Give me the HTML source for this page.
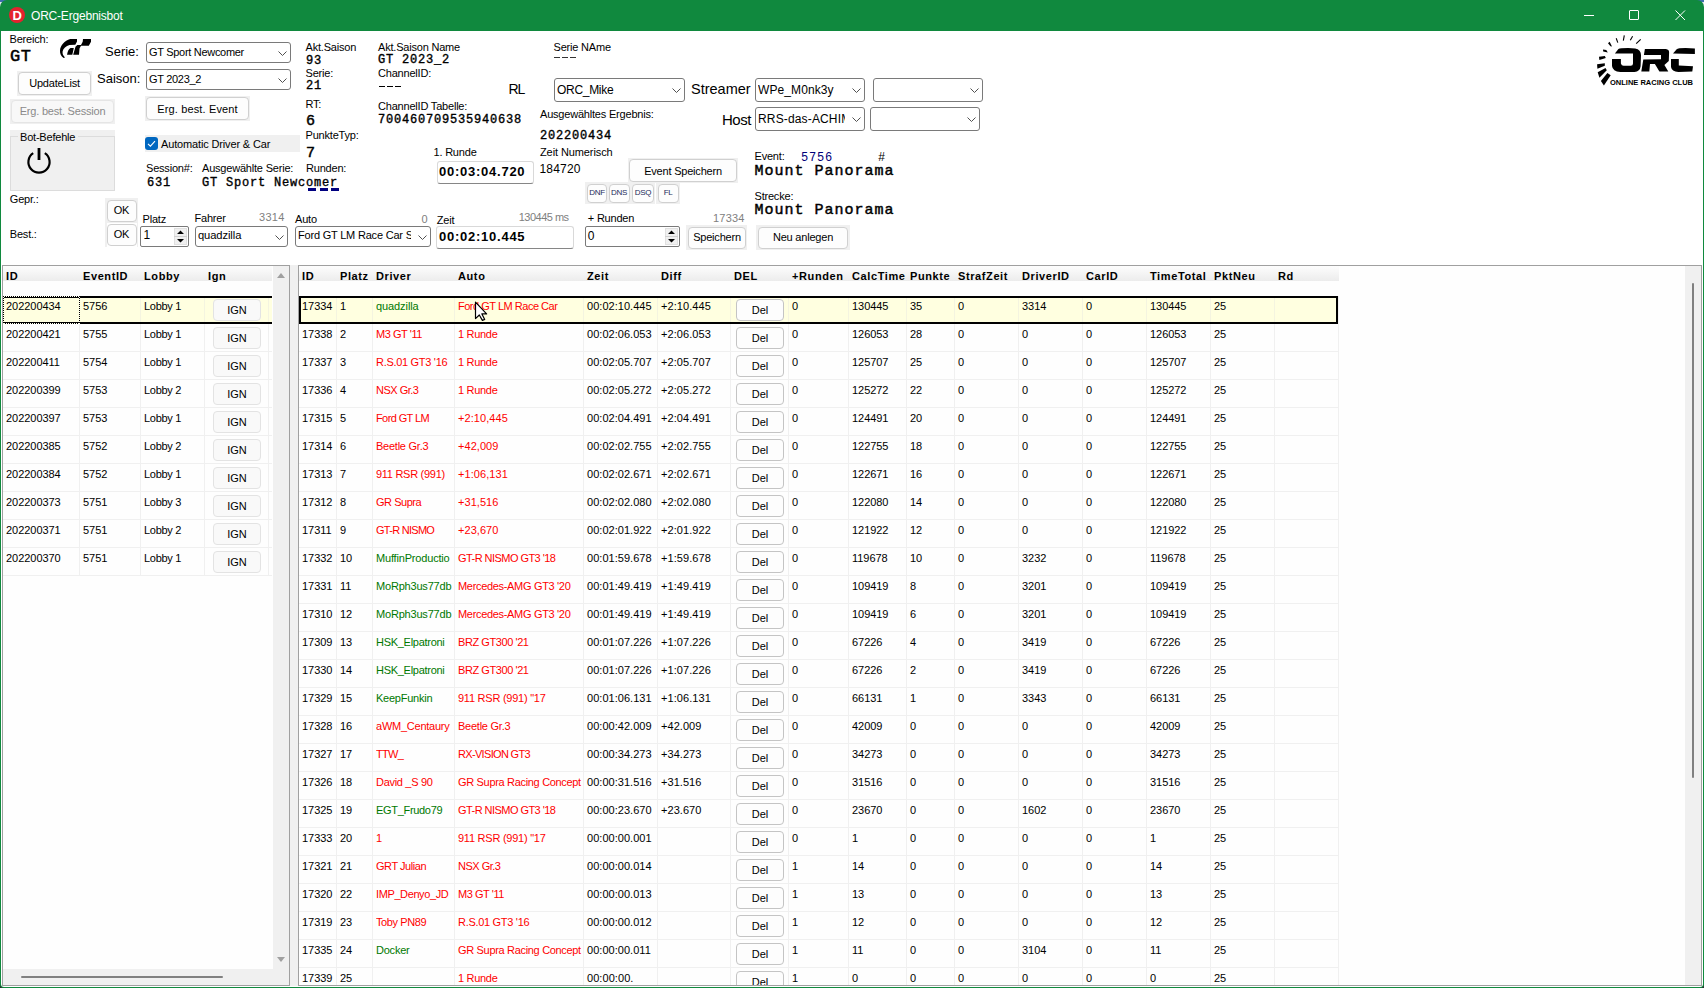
<!DOCTYPE html><html><head><meta charset="utf-8"><style>
html,body{margin:0;padding:0;}
body{width:1704px;height:988px;position:relative;overflow:hidden;background:#fff;font-family:"Liberation Sans",sans-serif;color:#000;}
.t{position:absolute;white-space:pre;}
.r{position:absolute;}
svg{display:block;}
</style></head><body>
<div class="r" style="left:0px;top:0px;width:1704px;height:988px;background:#2b2b30;"></div>
<div class="r" style="left:0px;top:0px;width:1704px;height:12px;background:linear-gradient(#3d6fae 0 2px,#e2e8ef 2px);"></div>
<div class="r" style="left:0px;top:0px;width:1704px;height:988px;background:#10893e;border-radius:7px 7px 4px 4px;"></div>
<div class="r" style="left:1px;top:31px;width:1702px;height:956px;background:#fff;border-radius:0 0 3px 3px;"></div>
<div class="r" style="left:9px;top:7px;width:16px;height:16px;border-radius:50%;background:#e5222e;"></div>
<div class="t" style="left:12.5px;top:9.30px;font-size:13px;line-height:13px;font-weight:700;color:#fff;">D</div>
<div class="t" style="left:31px;top:9.84px;font-size:12px;line-height:12px;color:#fff;letter-spacing:-0.2px;">ORC-Ergebnisbot</div>
<div class="r" style="left:1584px;top:15px;width:10px;height:1px;background:#fff;"></div>
<div class="r" style="left:1629px;top:10px;width:10px;height:10px;border:1px solid #fff;border-radius:1px;box-sizing:border-box;"></div>
<div class="r" style="left:1675px;top:10px;width:11px;height:11px;"><svg width="11" height="11"><path d="M0.5 0.5L10 10M10 0.5L0.5 10" stroke="#fff" stroke-width="1"/></svg></div>
<div class="t" style="left:9.5px;top:33.69px;font-size:11px;line-height:11px;letter-spacing:-0.2px;">Bereich:</div>
<div class="t" style="left:10px;top:47.98px;font-size:17px;line-height:17px;font-family:'Liberation Mono',monospace;-webkit-text-stroke:0.51px #000;letter-spacing:0.5px;">GT</div>
<div class="r" style="left:56px;top:34px;width:40px;height:28px;"><svg width="40" height="28" viewBox="0 0 40 28"><path d="M14.2,5 L21,5 L21,7.6 L19.3,10.8 L13.5,11 C10,12 7.2,14.5 6.6,17.5 C6.3,19.8 7.2,21.8 9,23.4 L7.6,24 C5,22.2 3.8,19.5 4,16.5 C4.4,11 8.5,7 14.2,5 Z" fill="#000"/><path d="M14.5,14 L17.8,14 L16.3,20.8 L11,20.8 C11.6,17.5 12.6,15 14.5,14 Z" fill="#000"/><path d="M27,5 L35,5 L35,7.8 L32.8,11.8 L25,11.8 L23.5,14.5 L23,20.8 L17.2,20.8 L19.5,12.8 L21.3,11 L25,11 L26.7,7.8 Z" fill="#000"/></svg></div>
<div class="t" style="left:105px;top:44.70px;font-size:13px;line-height:13px;">Serie:</div>
<div class="r" style="left:146px;top:42px;width:145px;height:21px;border:1px solid #7a7a7a;border-radius:3px;background:#fff;box-sizing:border-box;"></div>
<div class="r" style="left:149px;top:44px;width:125px;height:17px;overflow:hidden;">
<div class="t" style="left:0px;top:2.69px;font-size:11px;line-height:11px;letter-spacing:-0.3px;">GT Sport Newcomer</div></div>
<div class="r" style="left:278px;top:50.5px;width:9px;height:5px;"><svg width="9" height="5" viewBox="0 0 9 5"><path d="M0.5 0.5 L4.5 4.5 L8.5 0.5" fill="none" stroke="#505050" stroke-width="1"/></svg></div>
<div class="t" style="left:97px;top:72.30px;font-size:13px;line-height:13px;">Saison:</div>
<div class="r" style="left:146px;top:69px;width:145px;height:21px;border:1px solid #7a7a7a;border-radius:3px;background:#fff;box-sizing:border-box;"></div>
<div class="r" style="left:149px;top:71px;width:125px;height:17px;overflow:hidden;">
<div class="t" style="left:0px;top:2.69px;font-size:11px;line-height:11px;letter-spacing:-0.3px;">GT 2023_2</div></div>
<div class="r" style="left:278px;top:77.5px;width:9px;height:5px;"><svg width="9" height="5" viewBox="0 0 9 5"><path d="M0.5 0.5 L4.5 4.5 L8.5 0.5" fill="none" stroke="#505050" stroke-width="1"/></svg></div>
<div class="r" style="left:17px;top:71px;width:75px;height:25px;background:#f0f0f0;"></div>
<div class="r" style="left:18px;top:72px;width:73px;height:23px;background:#fdfdfd;border:1px solid #d0d0d0;border-radius:4px;box-sizing:border-box;"></div>
<div class="t" style="left:18px;top:78.39px;width:73px;text-align:center;font-size:11px;line-height:11px;letter-spacing:-0.2px;">UpdateList</div>
<div class="r" style="left:10px;top:99px;width:105px;height:25px;background:#f0f0f0;"></div>
<div class="r" style="left:11px;top:100px;width:103px;height:23px;background:#f8f8f8;border:1px solid #e5e5e5;border-radius:4px;box-sizing:border-box;"></div>
<div class="t" style="left:11px;top:106.19px;width:103px;text-align:center;font-size:11px;line-height:11px;color:#8a8a8a;letter-spacing:-0.2px;">Erg. best. Session</div>
<div class="r" style="left:145px;top:96px;width:105px;height:25px;background:#f0f0f0;"></div>
<div class="r" style="left:146px;top:97px;width:103px;height:23px;background:#fdfdfd;border:1px solid #d0d0d0;border-radius:4px;box-sizing:border-box;"></div>
<div class="t" style="left:146px;top:103.69px;width:103px;text-align:center;font-size:11px;line-height:11px;letter-spacing:0.15px;">Erg. best. Event</div>
<div class="r" style="left:10px;top:130px;width:105px;height:61px;background:#f0f0f0;"></div>
<div class="r" style="left:10px;top:136px;width:105px;height:55px;border:1px solid #dcdcdc;box-sizing:border-box;"></div>
<div class="r" style="left:18px;top:132px;width:60px;height:8px;background:#f0f0f0;"></div>
<div class="t" style="left:20px;top:131.69px;font-size:11px;line-height:11px;letter-spacing:-0.2px;">Bot-Befehle</div>
<div class="r" style="left:26px;top:148px;width:26px;height:27px;"><svg width="26" height="27" viewBox="0 0 26 27"><path d="M7.2,5.2 A10.6,10.6 0 1 0 18.8,5.2" fill="none" stroke="#000" stroke-width="2.2"/><rect x="11.6" y="0" width="2.8" height="12" fill="#000"/></svg></div>
<div class="r" style="left:145px;top:135px;width:155px;height:17px;background:#f0f0f0;"></div>
<div class="r" style="left:145px;top:137px;width:13px;height:13px;background:#0067c0;border-radius:3px;"></div>
<div class="r" style="left:145px;top:137px;width:13px;height:13px;"><svg width="13" height="13"><path d="M3 6.8 L5.4 9.1 L10 4.2" fill="none" stroke="#fff" stroke-width="1.1"/></svg></div>
<div class="t" style="left:161px;top:138.69px;font-size:11px;line-height:11px;letter-spacing:-0.15px;">Automatic Driver &amp; Car</div>
<div class="t" style="left:146px;top:162.69px;font-size:11px;line-height:11px;letter-spacing:-0.2px;">Session#:</div>
<div class="t" style="left:147px;top:176.81px;font-size:12px;line-height:12px;font-family:'Liberation Mono',monospace;-webkit-text-stroke:0.36px #000;letter-spacing:0.8px;">631</div>
<div class="t" style="left:202px;top:162.69px;font-size:11px;line-height:11px;letter-spacing:-0.2px;">Ausgewählte Serie:</div>
<div class="t" style="left:202px;top:176.81px;font-size:12px;line-height:12px;font-family:'Liberation Mono',monospace;-webkit-text-stroke:0.36px #000;letter-spacing:0.8px;">GT Sport Newcomer</div>
<div class="t" style="left:305.5px;top:41.69px;font-size:11px;line-height:11px;letter-spacing:-0.2px;">Akt.Saison</div>
<div class="t" style="left:306px;top:55.31px;font-size:12px;line-height:12px;font-family:'Liberation Mono',monospace;-webkit-text-stroke:0.36px #000;letter-spacing:0.8px;">93</div>
<div class="t" style="left:305.5px;top:67.69px;font-size:11px;line-height:11px;letter-spacing:-0.2px;">Serie:</div>
<div class="t" style="left:306px;top:79.81px;font-size:12px;line-height:12px;font-family:'Liberation Mono',monospace;-webkit-text-stroke:0.36px #000;letter-spacing:0.8px;">21</div>
<div class="t" style="left:305.5px;top:98.69px;font-size:11px;line-height:11px;letter-spacing:-0.2px;">RT:</div>
<div class="t" style="left:306px;top:114.01px;font-size:15px;line-height:15px;font-family:'Liberation Mono',monospace;-webkit-text-stroke:0.45px #000;letter-spacing:1px;">6</div>
<div class="t" style="left:305.5px;top:129.99px;font-size:11px;line-height:11px;letter-spacing:-0.2px;">PunkteTyp:</div>
<div class="t" style="left:306px;top:146.11px;font-size:15px;line-height:15px;font-family:'Liberation Mono',monospace;-webkit-text-stroke:0.45px #000;letter-spacing:1px;">7</div>
<div class="t" style="left:306px;top:162.69px;font-size:11px;line-height:11px;letter-spacing:-0.2px;">Runden:</div>
<div class="r" style="left:308px;top:188px;width:8px;height:2.6px;background:#000080;"></div>
<div class="r" style="left:319.5px;top:188px;width:8px;height:2.6px;background:#000080;"></div>
<div class="r" style="left:331px;top:188px;width:8px;height:2.6px;background:#000080;"></div>
<div class="t" style="left:378px;top:41.69px;font-size:11px;line-height:11px;letter-spacing:-0.2px;">Akt.Saison Name</div>
<div class="t" style="left:378px;top:53.81px;font-size:12px;line-height:12px;font-family:'Liberation Mono',monospace;-webkit-text-stroke:0.36px #000;letter-spacing:0.8px;">GT 2023_2</div>
<div class="t" style="left:378px;top:67.69px;font-size:11px;line-height:11px;letter-spacing:-0.2px;">ChannelID:</div>
<div class="r" style="left:379px;top:85.5px;width:6px;height:1.4px;background:#000;"></div>
<div class="r" style="left:387px;top:85.5px;width:6px;height:1.4px;background:#000;"></div>
<div class="r" style="left:395px;top:85.5px;width:6px;height:1.4px;background:#000;"></div>
<div class="t" style="left:378px;top:101.19px;font-size:11px;line-height:11px;letter-spacing:-0.2px;">ChannelID Tabelle:</div>
<div class="t" style="left:378px;top:114.41px;font-size:12px;line-height:12px;font-family:'Liberation Mono',monospace;-webkit-text-stroke:0.36px #000;letter-spacing:0.8px;">700460709535940638</div>
<div class="t" style="left:553.5px;top:41.69px;font-size:11px;line-height:11px;letter-spacing:-0.2px;">Serie NAme</div>
<div class="r" style="left:554px;top:57px;width:6px;height:1.2px;background:#333;"></div>
<div class="r" style="left:562px;top:57px;width:6px;height:1.2px;background:#333;"></div>
<div class="r" style="left:570px;top:57px;width:6px;height:1.2px;background:#333;"></div>
<div class="t" style="left:508.5px;top:82.15px;font-size:14px;line-height:14px;letter-spacing:-1px;">RL</div>
<div class="r" style="left:554px;top:78px;width:131px;height:24px;border:1px solid #7a7a7a;border-radius:3px;background:#fff;box-sizing:border-box;"></div>
<div class="r" style="left:557px;top:80px;width:111px;height:20px;overflow:hidden;">
<div class="t" style="left:0px;top:3.84px;font-size:12px;line-height:12px;letter-spacing:-0.3px;">ORC_Mike</div></div>
<div class="r" style="left:672px;top:88.0px;width:9px;height:5px;"><svg width="9" height="5" viewBox="0 0 9 5"><path d="M0.5 0.5 L4.5 4.5 L8.5 0.5" fill="none" stroke="#505050" stroke-width="1"/></svg></div>
<div class="t" style="left:691px;top:82.23px;font-size:14.5px;line-height:14.5px;">Streamer</div>
<div class="r" style="left:755px;top:78px;width:110px;height:24px;border:1px solid #7a7a7a;border-radius:3px;background:#fff;box-sizing:border-box;"></div>
<div class="r" style="left:758px;top:80px;width:90px;height:20px;overflow:hidden;">
<div class="t" style="left:0px;top:3.54px;font-size:12px;line-height:12px;letter-spacing:0.1px;">WPe_M0nk3y</div></div>
<div class="r" style="left:852px;top:88.0px;width:9px;height:5px;"><svg width="9" height="5" viewBox="0 0 9 5"><path d="M0.5 0.5 L4.5 4.5 L8.5 0.5" fill="none" stroke="#505050" stroke-width="1"/></svg></div>
<div class="r" style="left:873px;top:78px;width:110px;height:24px;border:1px solid #7a7a7a;border-radius:3px;background:#fff;box-sizing:border-box;"></div>
<div class="r" style="left:970px;top:88.0px;width:9px;height:5px;"><svg width="9" height="5" viewBox="0 0 9 5"><path d="M0.5 0.5 L4.5 4.5 L8.5 0.5" fill="none" stroke="#505050" stroke-width="1"/></svg></div>
<div class="t" style="left:722px;top:112.30px;font-size:15px;line-height:15px;letter-spacing:-0.5px;">Host</div>
<div class="r" style="left:755px;top:107px;width:110px;height:24px;border:1px solid #7a7a7a;border-radius:3px;background:#fff;box-sizing:border-box;"></div>
<div class="r" style="left:758px;top:109px;width:87px;height:20px;overflow:hidden;">
<div class="t" style="left:0px;top:3.84px;font-size:12px;line-height:12px;letter-spacing:0.15px;">RRS-das-ACHIM</div></div>
<div class="r" style="left:852px;top:117.0px;width:9px;height:5px;"><svg width="9" height="5" viewBox="0 0 9 5"><path d="M0.5 0.5 L4.5 4.5 L8.5 0.5" fill="none" stroke="#505050" stroke-width="1"/></svg></div>
<div class="r" style="left:870px;top:107px;width:110px;height:24px;border:1px solid #7a7a7a;border-radius:3px;background:#fff;box-sizing:border-box;"></div>
<div class="r" style="left:967px;top:117.0px;width:9px;height:5px;"><svg width="9" height="5" viewBox="0 0 9 5"><path d="M0.5 0.5 L4.5 4.5 L8.5 0.5" fill="none" stroke="#505050" stroke-width="1"/></svg></div>
<div class="t" style="left:540px;top:108.59px;font-size:11px;line-height:11px;letter-spacing:-0.2px;">Ausgewähltes Ergebnis:</div>
<div class="t" style="left:540px;top:129.61px;font-size:12px;line-height:12px;font-family:'Liberation Mono',monospace;-webkit-text-stroke:0.36px #000;letter-spacing:0.8px;">202200434</div>
<div class="t" style="left:433.5px;top:147.29px;font-size:11px;line-height:11px;letter-spacing:-0.2px;">1. Runde</div>
<div class="r" style="left:437px;top:161px;width:97px;height:23px;background:#fff;border:1px solid #d9d9d9;border-bottom:1px solid #868686;border-radius:3px;box-sizing:border-box;"></div>
<div class="t" style="left:439px;top:164.80px;font-size:13px;line-height:13px;font-weight:700;letter-spacing:0.75px;">00:03:04.720</div>
<div class="t" style="left:540px;top:146.59px;font-size:11px;line-height:11px;letter-spacing:-0.1px;">Zeit Numerisch</div>
<div class="t" style="left:539.5px;top:162.74px;font-size:12px;line-height:12px;letter-spacing:0.2px;">184720</div>
<div class="r" style="left:628px;top:158px;width:110px;height:25px;background:#f0f0f0;"></div>
<div class="r" style="left:629px;top:159px;width:108px;height:23px;background:#fdfdfd;border:1px solid #d0d0d0;border-radius:4px;box-sizing:border-box;"></div>
<div class="t" style="left:629px;top:165.69px;width:108px;text-align:center;font-size:11px;line-height:11px;letter-spacing:-0.2px;">Event Speichern</div>
<div class="r" style="left:585px;top:182px;width:70px;height:22px;background:#f0f0f0;"></div>
<div class="r" style="left:656px;top:182px;width:24px;height:22px;background:#f0f0f0;"></div>
<div class="r" style="left:587px;top:184px;width:20px;height:19px;background:#fdfdfd;border:1px solid #d0d0d0;border-radius:4px;box-sizing:border-box;"></div>
<div class="t" style="left:587px;top:189.23px;width:20px;text-align:center;font-size:8px;line-height:8px;color:#1c2a5a;letter-spacing:-0.3px;">DNF</div>
<div class="r" style="left:608.5px;top:184px;width:21px;height:19px;background:#fdfdfd;border:1px solid #d0d0d0;border-radius:4px;box-sizing:border-box;"></div>
<div class="t" style="left:608.5px;top:189.23px;width:21px;text-align:center;font-size:8px;line-height:8px;color:#1c2a5a;letter-spacing:-0.3px;">DNS</div>
<div class="r" style="left:632px;top:184px;width:22px;height:19px;background:#fdfdfd;border:1px solid #d0d0d0;border-radius:4px;box-sizing:border-box;"></div>
<div class="t" style="left:632px;top:189.23px;width:22px;text-align:center;font-size:8px;line-height:8px;color:#1c2a5a;letter-spacing:-0.3px;">DSQ</div>
<div class="r" style="left:657.5px;top:184px;width:21px;height:19px;background:#fdfdfd;border:1px solid #d0d0d0;border-radius:4px;box-sizing:border-box;"></div>
<div class="t" style="left:657.5px;top:189.23px;width:21px;text-align:center;font-size:8px;line-height:8px;color:#1c2a5a;letter-spacing:-0.3px;">FL</div>
<div class="t" style="left:754.5px;top:150.99px;font-size:11px;line-height:11px;letter-spacing:-0.2px;">Event:</div>
<div class="t" style="left:801px;top:151.61px;font-size:12px;line-height:12px;font-family:'Liberation Mono',monospace;color:#00007a;letter-spacing:0.8px;">5756</div>
<div class="t" style="left:878px;top:151.61px;font-size:12px;line-height:12px;font-family:'Liberation Mono',monospace;letter-spacing:0.8px;">#</div>
<div class="t" style="left:754.5px;top:163.51px;font-size:15px;line-height:15px;font-family:'Liberation Mono',monospace;-webkit-text-stroke:0.45px #000;letter-spacing:1px;">Mount Panorama</div>
<div class="t" style="left:754.5px;top:190.69px;font-size:11px;line-height:11px;letter-spacing:-0.2px;">Strecke:</div>
<div class="t" style="left:754.5px;top:203.41px;font-size:15px;line-height:15px;font-family:'Liberation Mono',monospace;-webkit-text-stroke:0.45px #000;letter-spacing:1px;">Mount Panorama</div>
<div class="t" style="left:9.8px;top:194.19px;font-size:11px;line-height:11px;letter-spacing:-0.2px;">Gepr.:</div>
<div class="t" style="left:9.8px;top:229.19px;font-size:11px;line-height:11px;letter-spacing:-0.2px;">Best.:</div>
<div class="r" style="left:105px;top:198px;width:33px;height:25px;background:#f0f0f0;"></div>
<div class="r" style="left:106.5px;top:199.5px;width:30px;height:22.5px;background:#fdfdfd;border:1px solid #d0d0d0;border-radius:4px;box-sizing:border-box;"></div>
<div class="t" style="left:106.5px;top:205.19px;width:30px;text-align:center;font-size:11px;line-height:11px;letter-spacing:-0.2px;">OK</div>
<div class="r" style="left:106.5px;top:224px;width:30px;height:21.5px;background:#fdfdfd;border:1px solid #d0d0d0;border-radius:4px;box-sizing:border-box;"></div>
<div class="t" style="left:106.5px;top:229.39px;width:30px;text-align:center;font-size:11px;line-height:11px;letter-spacing:-0.2px;">OK</div>
<div class="r" style="left:105px;top:223px;width:1.5px;height:24px;background:#f0f0f0;"></div>
<div class="r" style="left:136.5px;top:223px;width:1.5px;height:24px;background:#f0f0f0;"></div>
<div class="t" style="left:142.5px;top:214.29px;font-size:11px;line-height:11px;letter-spacing:-0.2px;">Platz</div>
<div class="r" style="left:140px;top:226px;width:49px;height:21px;background:#fff;border:1px solid #7a7a7a;border-radius:2px;box-sizing:border-box;"></div>
<div class="r" style="left:174px;top:228px;width:13px;height:17px;background:#f0f0f0;border:1px solid #e0e0e0;box-sizing:border-box;"></div>
<div class="r" style="left:174px;top:236px;width:13px;height:1px;background:#d0d0d0;"></div>
<div class="r" style="left:177px;top:230px;width:7px;height:13px;"><svg width="7" height="13"><path d="M0 4 L3.5 0.5 L7 4 Z M0 9 L7 9 L3.5 12.5 Z" fill="#000"/></svg></div>
<div class="t" style="left:143.5px;top:229.34px;font-size:12px;line-height:12px;letter-spacing:-0.2px;">1</div>
<div class="t" style="left:194.5px;top:212.69px;font-size:11px;line-height:11px;letter-spacing:-0.2px;">Fahrer</div>
<div class="t" style="left:259px;top:212.19px;font-size:11px;line-height:11px;color:#808080;letter-spacing:0.3px;">3314</div>
<div class="r" style="left:195px;top:226px;width:93px;height:21px;border:1px solid #7a7a7a;border-radius:3px;background:#fff;box-sizing:border-box;"></div>
<div class="r" style="left:198px;top:228px;width:73px;height:17px;overflow:hidden;">
<div class="t" style="left:0px;top:2.02px;font-size:11.2px;line-height:11.2px;letter-spacing:-0.1px;">quadzilla</div></div>
<div class="r" style="left:275px;top:234.5px;width:9px;height:5px;"><svg width="9" height="5" viewBox="0 0 9 5"><path d="M0.5 0.5 L4.5 4.5 L8.5 0.5" fill="none" stroke="#505050" stroke-width="1"/></svg></div>
<div class="t" style="left:295px;top:214.19px;font-size:11px;line-height:11px;letter-spacing:-0.2px;">Auto</div>
<div class="t" style="left:421.5px;top:214.19px;font-size:11px;line-height:11px;color:#808080;letter-spacing:-0.2px;">0</div>
<div class="r" style="left:295px;top:226px;width:136px;height:21px;border:1px solid #7a7a7a;border-radius:3px;background:#fff;box-sizing:border-box;"></div>
<div class="r" style="left:298px;top:228px;width:113px;height:17px;overflow:hidden;">
<div class="t" style="left:0px;top:2.19px;font-size:11px;line-height:11px;letter-spacing:-0.2px;">Ford GT LM Race Car Sp</div></div>
<div class="r" style="left:418px;top:234.5px;width:9px;height:5px;"><svg width="9" height="5" viewBox="0 0 9 5"><path d="M0.5 0.5 L4.5 4.5 L8.5 0.5" fill="none" stroke="#505050" stroke-width="1"/></svg></div>
<div class="t" style="left:436.8px;top:214.59px;font-size:11px;line-height:11px;letter-spacing:-0.2px;">Zeit</div>
<div class="t" style="left:518.7px;top:212.49px;font-size:11px;line-height:11px;color:#808080;letter-spacing:-0.5px;">130445 ms</div>
<div class="r" style="left:436px;top:225.5px;width:138px;height:23px;background:#fff;border:1px solid #d9d9d9;border-bottom:1px solid #868686;border-radius:3px;box-sizing:border-box;"></div>
<div class="t" style="left:439px;top:229.60px;font-size:13px;line-height:13px;font-weight:700;letter-spacing:0.75px;">00:02:10.445</div>
<div class="t" style="left:587.8px;top:212.69px;font-size:11px;line-height:11px;letter-spacing:-0.2px;">+ Runden</div>
<div class="t" style="left:713px;top:212.69px;font-size:11px;line-height:11px;color:#808080;letter-spacing:0.2px;">17334</div>
<div class="r" style="left:585px;top:226px;width:95px;height:21px;background:#fff;border:1px solid #7a7a7a;border-radius:2px;box-sizing:border-box;"></div>
<div class="r" style="left:665px;top:228px;width:13px;height:17px;background:#f0f0f0;border:1px solid #e0e0e0;box-sizing:border-box;"></div>
<div class="r" style="left:665px;top:236px;width:13px;height:1px;background:#d0d0d0;"></div>
<div class="r" style="left:668px;top:230px;width:7px;height:13px;"><svg width="7" height="13"><path d="M0 4 L3.5 0.5 L7 4 Z M0 9 L7 9 L3.5 12.5 Z" fill="#000"/></svg></div>
<div class="t" style="left:587.8px;top:229.94px;font-size:12px;line-height:12px;letter-spacing:-0.2px;">0</div>
<div class="r" style="left:686px;top:225px;width:61px;height:25px;background:#f0f0f0;"></div>
<div class="r" style="left:688px;top:226.5px;width:58px;height:22px;background:#fdfdfd;border:1px solid #d0d0d0;border-radius:4px;box-sizing:border-box;"></div>
<div class="t" style="left:688px;top:232.29px;width:58px;text-align:center;font-size:11px;line-height:11px;letter-spacing:-0.2px;">Speichern</div>
<div class="r" style="left:756px;top:225px;width:94px;height:25px;background:#f0f0f0;"></div>
<div class="r" style="left:758px;top:226.5px;width:90px;height:22px;background:#fdfdfd;border:1px solid #d0d0d0;border-radius:4px;box-sizing:border-box;"></div>
<div class="t" style="left:758px;top:232.49px;width:90px;text-align:center;font-size:11px;line-height:11px;letter-spacing:-0.2px;">Neu anlegen</div>
<div class="r" style="left:1596px;top:34px;width:104px;height:54px;"><svg width="104" height="54" viewBox="1596 34 104 54">
<g fill="#000">
<path d="M1614.9,53.6 L1618.4,49 Q1620,48.1 1628.1,48.1 L1635.2,48.4 Q1641,49.5 1641,55.2 L1640.6,66.2 Q1640,71.5 1634.5,72 L1620.3,72 Q1612.6,71.5 1612,66 L1612,59 L1620.9,59 L1620.9,63.6 Q1621.5,65.8 1623.6,65.8 L1630.7,65.8 Q1633,65.8 1633,63.6 L1633,53.6 Z"/>
<path d="M1644.9,49 L1665.9,49 Q1669.1,49.5 1669.1,52.3 L1668.8,61 L1664.4,64.9 L1668.3,71.6 L1659.4,71.6 L1654.9,63.9 L1650,63.9 L1649.3,71.6 L1641.3,71.6 L1643.3,59.5 L1661,59.2 L1661,54.9 L1643.9,54.9 Z"/>
<path d="M1673,53.6 L1676.5,49.4 Q1678,48.1 1685.5,48.1 L1694.9,48.6 L1694.9,53.9 Z"/>
<path d="M1671,59 L1678.8,59 L1678.8,65.4 L1693,66.2 L1692.3,71.6 L1678.4,72 Q1671.7,71.5 1671,67 Z"/>
<path d="M1600.9,81 L1603.9,85.5 L1610.7,75.2 L1607.4,72.9 Z"/>
<path d="M1597.7,72.3 L1599.4,77.8 L1606.8,70.3 L1605.5,68.1 Z"/>
<path d="M1597.1,64.2 L1597.4,68.7 L1604.8,65.8 L1604.8,63.2 Z"/>
<path d="M1599,56.8 L1599.4,59.9 L1605.8,58 L1604.8,56 Z"/>
<path d="M1603,49.4 L1603.2,51.6 L1607.8,52.5 L1606.3,50 Z"/>
<path d="M1608,43.2 L1609.6,41.7 L1612,46.5 L1610.5,46.3 Z"/>
</g>
<g stroke="#000" stroke-width="1.1" fill="none">
<path d="M1616.2,38.2 L1617.8,42.6"/>
<path d="M1624.3,35.3 L1623.3,40.7"/>
<path d="M1632.6,36.2 L1630.3,40.3"/>
<path d="M1640.7,39.4 L1636.2,43.6"/>
</g>
<text x="1610" y="85" font-family="Liberation Sans" font-weight="700" font-size="7.4" textLength="83" lengthAdjust="spacingAndGlyphs">ONLINE RACING CLUB</text>
</svg></div>
<div class="r" style="left:2px;top:265px;width:288px;height:721px;border:1px solid #a0a0a0;box-sizing:border-box;background:#fefefe;"></div>
<div class="r" style="left:3px;top:266px;width:269px;height:15px;background:linear-gradient(#fdfdfd,#ececec);"></div>
<div class="t" style="left:6px;top:270.69px;font-size:11px;line-height:11px;font-weight:700;letter-spacing:0.6px;">ID</div>
<div class="t" style="left:83px;top:270.69px;font-size:11px;line-height:11px;font-weight:700;letter-spacing:0.6px;">EventID</div>
<div class="t" style="left:144px;top:270.69px;font-size:11px;line-height:11px;font-weight:700;letter-spacing:0.6px;">Lobby</div>
<div class="t" style="left:208px;top:270.69px;font-size:11px;line-height:11px;font-weight:700;letter-spacing:0.6px;">Ign</div>
<div class="r" style="left:3px;top:351px;width:269px;height:1px;background:#f0f0f0;"></div>
<div class="r" style="left:3px;top:379px;width:269px;height:1px;background:#f0f0f0;"></div>
<div class="r" style="left:3px;top:407px;width:269px;height:1px;background:#f0f0f0;"></div>
<div class="r" style="left:3px;top:435px;width:269px;height:1px;background:#f0f0f0;"></div>
<div class="r" style="left:3px;top:463px;width:269px;height:1px;background:#f0f0f0;"></div>
<div class="r" style="left:3px;top:491px;width:269px;height:1px;background:#f0f0f0;"></div>
<div class="r" style="left:3px;top:519px;width:269px;height:1px;background:#f0f0f0;"></div>
<div class="r" style="left:3px;top:547px;width:269px;height:1px;background:#f0f0f0;"></div>
<div class="r" style="left:3px;top:575px;width:269px;height:1px;background:#f0f0f0;"></div>
<div class="r" style="left:79px;top:296px;width:1px;height:280px;background:#f0f0f0;"></div>
<div class="r" style="left:140px;top:296px;width:1px;height:280px;background:#f0f0f0;"></div>
<div class="r" style="left:204px;top:296px;width:1px;height:280px;background:#f0f0f0;"></div>
<div class="r" style="left:268px;top:296px;width:1px;height:280px;background:#f0f0f0;"></div>
<div class="r" style="left:3px;top:298px;width:269px;height:24px;background:#ffffe0;"></div>
<div class="r" style="left:79px;top:298px;width:1px;height:24px;background:#f4f4e0;"></div>
<div class="r" style="left:140px;top:298px;width:1px;height:24px;background:#f4f4e0;"></div>
<div class="r" style="left:204px;top:298px;width:1px;height:24px;background:#f4f4e0;"></div>
<div class="r" style="left:268px;top:298px;width:1px;height:24px;background:#f4f4e0;"></div>
<div class="r" style="left:3px;top:296px;width:269px;height:2px;background:#000;"></div>
<div class="r" style="left:3px;top:322px;width:269px;height:2px;background:#000;"></div>
<div class="r" style="left:3px;top:296px;width:77px;height:1px;background:repeating-linear-gradient(90deg,#000 0 1px,#fffff0 1px 2px);"></div>
<div class="r" style="left:3px;top:323px;width:77px;height:1px;background:repeating-linear-gradient(90deg,#000 0 1px,#fffff0 1px 2px);"></div>
<div class="r" style="left:3px;top:296px;width:1px;height:28px;background:repeating-linear-gradient(180deg,#000 0 1px,#fffff0 1px 2px);"></div>
<div class="r" style="left:79px;top:296px;width:1px;height:28px;background:repeating-linear-gradient(180deg,#000 0 1px,#fffff0 1px 2px);"></div>
<div class="t" style="left:6px;top:300.69px;font-size:11px;line-height:11px;letter-spacing:-0.04px;">202200434</div>
<div class="t" style="left:83px;top:300.69px;font-size:11px;line-height:11px;letter-spacing:-0.048px;">5756</div>
<div class="t" style="left:144px;top:300.69px;font-size:11px;line-height:11px;letter-spacing:-0.302px;">Lobby 1</div>
<div class="r" style="left:213px;top:298.5px;width:48px;height:22px;background:#f9f9f9;border:1px solid #e3e3e3;border-radius:4px;box-sizing:border-box;"></div>
<div class="t" style="left:213px;top:304.69px;width:48px;text-align:center;font-size:11px;line-height:11px;">IGN</div>
<div class="t" style="left:6px;top:328.69px;font-size:11px;line-height:11px;letter-spacing:-0.04px;">202200421</div>
<div class="t" style="left:83px;top:328.69px;font-size:11px;line-height:11px;letter-spacing:-0.048px;">5755</div>
<div class="t" style="left:144px;top:328.69px;font-size:11px;line-height:11px;letter-spacing:-0.302px;">Lobby 1</div>
<div class="r" style="left:213px;top:326.5px;width:48px;height:22px;background:#f9f9f9;border:1px solid #e3e3e3;border-radius:4px;box-sizing:border-box;"></div>
<div class="t" style="left:213px;top:332.69px;width:48px;text-align:center;font-size:11px;line-height:11px;">IGN</div>
<div class="t" style="left:6px;top:356.69px;font-size:11px;line-height:11px;letter-spacing:-0.04px;">202200411</div>
<div class="t" style="left:83px;top:356.69px;font-size:11px;line-height:11px;letter-spacing:-0.048px;">5754</div>
<div class="t" style="left:144px;top:356.69px;font-size:11px;line-height:11px;letter-spacing:-0.302px;">Lobby 1</div>
<div class="r" style="left:213px;top:354.5px;width:48px;height:22px;background:#f9f9f9;border:1px solid #e3e3e3;border-radius:4px;box-sizing:border-box;"></div>
<div class="t" style="left:213px;top:360.69px;width:48px;text-align:center;font-size:11px;line-height:11px;">IGN</div>
<div class="t" style="left:6px;top:384.69px;font-size:11px;line-height:11px;letter-spacing:-0.04px;">202200399</div>
<div class="t" style="left:83px;top:384.69px;font-size:11px;line-height:11px;letter-spacing:-0.048px;">5753</div>
<div class="t" style="left:144px;top:384.69px;font-size:11px;line-height:11px;letter-spacing:-0.302px;">Lobby 2</div>
<div class="r" style="left:213px;top:382.5px;width:48px;height:22px;background:#f9f9f9;border:1px solid #e3e3e3;border-radius:4px;box-sizing:border-box;"></div>
<div class="t" style="left:213px;top:388.69px;width:48px;text-align:center;font-size:11px;line-height:11px;">IGN</div>
<div class="t" style="left:6px;top:412.69px;font-size:11px;line-height:11px;letter-spacing:-0.04px;">202200397</div>
<div class="t" style="left:83px;top:412.69px;font-size:11px;line-height:11px;letter-spacing:-0.048px;">5753</div>
<div class="t" style="left:144px;top:412.69px;font-size:11px;line-height:11px;letter-spacing:-0.302px;">Lobby 1</div>
<div class="r" style="left:213px;top:410.5px;width:48px;height:22px;background:#f9f9f9;border:1px solid #e3e3e3;border-radius:4px;box-sizing:border-box;"></div>
<div class="t" style="left:213px;top:416.69px;width:48px;text-align:center;font-size:11px;line-height:11px;">IGN</div>
<div class="t" style="left:6px;top:440.69px;font-size:11px;line-height:11px;letter-spacing:-0.04px;">202200385</div>
<div class="t" style="left:83px;top:440.69px;font-size:11px;line-height:11px;letter-spacing:-0.048px;">5752</div>
<div class="t" style="left:144px;top:440.69px;font-size:11px;line-height:11px;letter-spacing:-0.302px;">Lobby 2</div>
<div class="r" style="left:213px;top:438.5px;width:48px;height:22px;background:#f9f9f9;border:1px solid #e3e3e3;border-radius:4px;box-sizing:border-box;"></div>
<div class="t" style="left:213px;top:444.69px;width:48px;text-align:center;font-size:11px;line-height:11px;">IGN</div>
<div class="t" style="left:6px;top:468.69px;font-size:11px;line-height:11px;letter-spacing:-0.04px;">202200384</div>
<div class="t" style="left:83px;top:468.69px;font-size:11px;line-height:11px;letter-spacing:-0.048px;">5752</div>
<div class="t" style="left:144px;top:468.69px;font-size:11px;line-height:11px;letter-spacing:-0.302px;">Lobby 1</div>
<div class="r" style="left:213px;top:466.5px;width:48px;height:22px;background:#f9f9f9;border:1px solid #e3e3e3;border-radius:4px;box-sizing:border-box;"></div>
<div class="t" style="left:213px;top:472.69px;width:48px;text-align:center;font-size:11px;line-height:11px;">IGN</div>
<div class="t" style="left:6px;top:496.69px;font-size:11px;line-height:11px;letter-spacing:-0.04px;">202200373</div>
<div class="t" style="left:83px;top:496.69px;font-size:11px;line-height:11px;letter-spacing:-0.048px;">5751</div>
<div class="t" style="left:144px;top:496.69px;font-size:11px;line-height:11px;letter-spacing:-0.302px;">Lobby 3</div>
<div class="r" style="left:213px;top:494.5px;width:48px;height:22px;background:#f9f9f9;border:1px solid #e3e3e3;border-radius:4px;box-sizing:border-box;"></div>
<div class="t" style="left:213px;top:500.69px;width:48px;text-align:center;font-size:11px;line-height:11px;">IGN</div>
<div class="t" style="left:6px;top:524.69px;font-size:11px;line-height:11px;letter-spacing:-0.04px;">202200371</div>
<div class="t" style="left:83px;top:524.69px;font-size:11px;line-height:11px;letter-spacing:-0.048px;">5751</div>
<div class="t" style="left:144px;top:524.69px;font-size:11px;line-height:11px;letter-spacing:-0.302px;">Lobby 2</div>
<div class="r" style="left:213px;top:522.5px;width:48px;height:22px;background:#f9f9f9;border:1px solid #e3e3e3;border-radius:4px;box-sizing:border-box;"></div>
<div class="t" style="left:213px;top:528.69px;width:48px;text-align:center;font-size:11px;line-height:11px;">IGN</div>
<div class="t" style="left:6px;top:552.69px;font-size:11px;line-height:11px;letter-spacing:-0.04px;">202200370</div>
<div class="t" style="left:83px;top:552.69px;font-size:11px;line-height:11px;letter-spacing:-0.048px;">5751</div>
<div class="t" style="left:144px;top:552.69px;font-size:11px;line-height:11px;letter-spacing:-0.302px;">Lobby 1</div>
<div class="r" style="left:213px;top:550.5px;width:48px;height:22px;background:#f9f9f9;border:1px solid #e3e3e3;border-radius:4px;box-sizing:border-box;"></div>
<div class="t" style="left:213px;top:556.69px;width:48px;text-align:center;font-size:11px;line-height:11px;">IGN</div>
<div class="r" style="left:273px;top:266px;width:16px;height:719px;background:#f0f0f0;"></div>
<div class="r" style="left:3px;top:969px;width:270px;height:16px;background:#f0f0f0;"></div>
<div class="r" style="left:21px;top:976px;width:202px;height:2px;background:#808080;border-radius:1px;"></div>
<div class="r" style="left:276px;top:271px;width:10px;height:8px;"><svg width="10" height="8"><path d="M1 7 L5 2 L9 7 Z" fill="#a0a0a0"/></svg></div>
<div class="r" style="left:276px;top:956px;width:10px;height:8px;"><svg width="10" height="8"><path d="M1 1 L9 1 L5 6 Z" fill="#a0a0a0"/></svg></div>
<div class="r" style="left:290px;top:265px;width:8px;height:721px;background:#f0f0f0;"></div>
<div class="r" style="left:298px;top:265px;width:1404px;height:721px;border:1px solid #a0a0a0;box-sizing:border-box;background:#fefefe;"></div>
<div class="r" style="left:299px;top:266px;width:1040px;height:15px;background:linear-gradient(#fdfdfd,#ececec);"></div>
<div class="t" style="left:302px;top:270.69px;font-size:11px;line-height:11px;font-weight:700;letter-spacing:0.6px;">ID</div>
<div class="t" style="left:340px;top:270.69px;font-size:11px;line-height:11px;font-weight:700;letter-spacing:0.6px;">Platz</div>
<div class="t" style="left:376px;top:270.69px;font-size:11px;line-height:11px;font-weight:700;letter-spacing:0.6px;">Driver</div>
<div class="t" style="left:458px;top:270.69px;font-size:11px;line-height:11px;font-weight:700;letter-spacing:0.6px;">Auto</div>
<div class="t" style="left:587px;top:270.69px;font-size:11px;line-height:11px;font-weight:700;letter-spacing:0.6px;">Zeit</div>
<div class="t" style="left:661px;top:270.69px;font-size:11px;line-height:11px;font-weight:700;letter-spacing:0.6px;">Diff</div>
<div class="t" style="left:734px;top:270.69px;font-size:11px;line-height:11px;font-weight:700;letter-spacing:0.6px;">DEL</div>
<div class="t" style="left:792px;top:270.69px;font-size:11px;line-height:11px;font-weight:700;letter-spacing:0.6px;">+Runden</div>
<div class="t" style="left:852px;top:270.69px;font-size:11px;line-height:11px;font-weight:700;letter-spacing:0.6px;">CalcTime</div>
<div class="t" style="left:910px;top:270.69px;font-size:11px;line-height:11px;font-weight:700;letter-spacing:0.6px;">Punkte</div>
<div class="t" style="left:958px;top:270.69px;font-size:11px;line-height:11px;font-weight:700;letter-spacing:0.6px;">StrafZeit</div>
<div class="t" style="left:1022px;top:270.69px;font-size:11px;line-height:11px;font-weight:700;letter-spacing:0.6px;">DriverID</div>
<div class="t" style="left:1086px;top:270.69px;font-size:11px;line-height:11px;font-weight:700;letter-spacing:0.6px;">CarID</div>
<div class="t" style="left:1150px;top:270.69px;font-size:11px;line-height:11px;font-weight:700;letter-spacing:0.6px;">TimeTotal</div>
<div class="t" style="left:1214px;top:270.69px;font-size:11px;line-height:11px;font-weight:700;letter-spacing:0.6px;">PktNeu</div>
<div class="t" style="left:1278px;top:270.69px;font-size:11px;line-height:11px;font-weight:700;letter-spacing:0.6px;">Rd</div>
<div class="r" style="left:299px;top:351px;width:1039px;height:1px;background:#f0f0f0;"></div>
<div class="r" style="left:299px;top:379px;width:1039px;height:1px;background:#f0f0f0;"></div>
<div class="r" style="left:299px;top:407px;width:1039px;height:1px;background:#f0f0f0;"></div>
<div class="r" style="left:299px;top:435px;width:1039px;height:1px;background:#f0f0f0;"></div>
<div class="r" style="left:299px;top:463px;width:1039px;height:1px;background:#f0f0f0;"></div>
<div class="r" style="left:299px;top:491px;width:1039px;height:1px;background:#f0f0f0;"></div>
<div class="r" style="left:299px;top:519px;width:1039px;height:1px;background:#f0f0f0;"></div>
<div class="r" style="left:299px;top:547px;width:1039px;height:1px;background:#f0f0f0;"></div>
<div class="r" style="left:299px;top:575px;width:1039px;height:1px;background:#f0f0f0;"></div>
<div class="r" style="left:299px;top:603px;width:1039px;height:1px;background:#f0f0f0;"></div>
<div class="r" style="left:299px;top:631px;width:1039px;height:1px;background:#f0f0f0;"></div>
<div class="r" style="left:299px;top:659px;width:1039px;height:1px;background:#f0f0f0;"></div>
<div class="r" style="left:299px;top:687px;width:1039px;height:1px;background:#f0f0f0;"></div>
<div class="r" style="left:299px;top:715px;width:1039px;height:1px;background:#f0f0f0;"></div>
<div class="r" style="left:299px;top:743px;width:1039px;height:1px;background:#f0f0f0;"></div>
<div class="r" style="left:299px;top:771px;width:1039px;height:1px;background:#f0f0f0;"></div>
<div class="r" style="left:299px;top:799px;width:1039px;height:1px;background:#f0f0f0;"></div>
<div class="r" style="left:299px;top:827px;width:1039px;height:1px;background:#f0f0f0;"></div>
<div class="r" style="left:299px;top:855px;width:1039px;height:1px;background:#f0f0f0;"></div>
<div class="r" style="left:299px;top:883px;width:1039px;height:1px;background:#f0f0f0;"></div>
<div class="r" style="left:299px;top:911px;width:1039px;height:1px;background:#f0f0f0;"></div>
<div class="r" style="left:299px;top:939px;width:1039px;height:1px;background:#f0f0f0;"></div>
<div class="r" style="left:299px;top:967px;width:1039px;height:1px;background:#f0f0f0;"></div>
<div class="r" style="left:336px;top:296px;width:1px;height:689px;background:#f0f0f0;"></div>
<div class="r" style="left:372px;top:296px;width:1px;height:689px;background:#f0f0f0;"></div>
<div class="r" style="left:454px;top:296px;width:1px;height:689px;background:#f0f0f0;"></div>
<div class="r" style="left:583px;top:296px;width:1px;height:689px;background:#f0f0f0;"></div>
<div class="r" style="left:657px;top:296px;width:1px;height:689px;background:#f0f0f0;"></div>
<div class="r" style="left:730px;top:296px;width:1px;height:689px;background:#f0f0f0;"></div>
<div class="r" style="left:788px;top:296px;width:1px;height:689px;background:#f0f0f0;"></div>
<div class="r" style="left:848px;top:296px;width:1px;height:689px;background:#f0f0f0;"></div>
<div class="r" style="left:906px;top:296px;width:1px;height:689px;background:#f0f0f0;"></div>
<div class="r" style="left:954px;top:296px;width:1px;height:689px;background:#f0f0f0;"></div>
<div class="r" style="left:1018px;top:296px;width:1px;height:689px;background:#f0f0f0;"></div>
<div class="r" style="left:1082px;top:296px;width:1px;height:689px;background:#f0f0f0;"></div>
<div class="r" style="left:1146px;top:296px;width:1px;height:689px;background:#f0f0f0;"></div>
<div class="r" style="left:1210px;top:296px;width:1px;height:689px;background:#f0f0f0;"></div>
<div class="r" style="left:1274px;top:296px;width:1px;height:689px;background:#f0f0f0;"></div>
<div class="r" style="left:1338px;top:296px;width:1px;height:689px;background:#f0f0f0;"></div>
<div class="r" style="left:299px;top:296px;width:1039px;height:28px;background:#ffffe0;border:2px solid #000;box-sizing:border-box;"></div>
<div class="r" style="left:336px;top:298px;width:1px;height:24px;background:#f4f4e0;"></div>
<div class="r" style="left:372px;top:298px;width:1px;height:24px;background:#f4f4e0;"></div>
<div class="r" style="left:454px;top:298px;width:1px;height:24px;background:#f4f4e0;"></div>
<div class="r" style="left:583px;top:298px;width:1px;height:24px;background:#f4f4e0;"></div>
<div class="r" style="left:657px;top:298px;width:1px;height:24px;background:#f4f4e0;"></div>
<div class="r" style="left:730px;top:298px;width:1px;height:24px;background:#f4f4e0;"></div>
<div class="r" style="left:788px;top:298px;width:1px;height:24px;background:#f4f4e0;"></div>
<div class="r" style="left:848px;top:298px;width:1px;height:24px;background:#f4f4e0;"></div>
<div class="r" style="left:906px;top:298px;width:1px;height:24px;background:#f4f4e0;"></div>
<div class="r" style="left:954px;top:298px;width:1px;height:24px;background:#f4f4e0;"></div>
<div class="r" style="left:1018px;top:298px;width:1px;height:24px;background:#f4f4e0;"></div>
<div class="r" style="left:1082px;top:298px;width:1px;height:24px;background:#f4f4e0;"></div>
<div class="r" style="left:1146px;top:298px;width:1px;height:24px;background:#f4f4e0;"></div>
<div class="r" style="left:1210px;top:298px;width:1px;height:24px;background:#f4f4e0;"></div>
<div class="r" style="left:1274px;top:298px;width:1px;height:24px;background:#f4f4e0;"></div>
<div class="r" style="left:299px;top:296px;width:1386px;height:689px;overflow:hidden;">
<div class="t" style="left:3px;top:4.69px;font-size:11px;line-height:11px;letter-spacing:-0.045px;">17334</div>
<div class="t" style="left:41px;top:4.69px;font-size:11px;line-height:11px;">1</div>
<div class="r" style="left:77px;top:0px;width:78px;height:27px;overflow:hidden;">
<div class="t" style="left:0px;top:4.69px;font-size:11px;line-height:11px;color:#007800;letter-spacing:-0.087px;">quadzilla</div></div>
<div class="t" style="left:159px;top:4.69px;font-size:11px;line-height:11px;color:#ff0000;letter-spacing:-0.486px;">Ford GT LM Race Car</div>
<div class="t" style="left:288px;top:4.69px;font-size:11px;line-height:11px;letter-spacing:0.038px;">00:02:10.445</div>
<div class="t" style="left:362px;top:4.69px;font-size:11px;line-height:11px;letter-spacing:0.065px;">+2:10.445</div>
<div class="t" style="left:493px;top:4.69px;font-size:11px;line-height:11px;">0</div>
<div class="t" style="left:553px;top:4.69px;font-size:11px;line-height:11px;letter-spacing:-0.043px;">130445</div>
<div class="t" style="left:611px;top:4.69px;font-size:11px;line-height:11px;letter-spacing:-0.072px;">35</div>
<div class="t" style="left:659px;top:4.69px;font-size:11px;line-height:11px;">0</div>
<div class="t" style="left:723px;top:4.69px;font-size:11px;line-height:11px;letter-spacing:-0.048px;">3314</div>
<div class="t" style="left:787px;top:4.69px;font-size:11px;line-height:11px;">0</div>
<div class="t" style="left:851px;top:4.69px;font-size:11px;line-height:11px;letter-spacing:-0.043px;">130445</div>
<div class="t" style="left:915px;top:4.69px;font-size:11px;line-height:11px;letter-spacing:-0.072px;">25</div>
<div class="r" style="left:437px;top:2.5px;width:48px;height:22.5px;background:#fdfdfd;border:1px solid #c4c4c4;border-radius:4px;box-sizing:border-box;"></div>
<div class="t" style="left:437px;top:8.69px;width:48px;text-align:center;font-size:11px;line-height:11px;">Del</div>
<div class="t" style="left:3px;top:32.69px;font-size:11px;line-height:11px;letter-spacing:-0.045px;">17338</div>
<div class="t" style="left:41px;top:32.69px;font-size:11px;line-height:11px;">2</div>
<div class="r" style="left:77px;top:28px;width:78px;height:27px;overflow:hidden;">
<div class="t" style="left:0px;top:4.69px;font-size:11px;line-height:11px;color:#ff0000;letter-spacing:-0.444px;">M3 GT &#x27;11</div></div>
<div class="t" style="left:159px;top:32.69px;font-size:11px;line-height:11px;color:#ff0000;letter-spacing:-0.302px;">1 Runde</div>
<div class="t" style="left:288px;top:32.69px;font-size:11px;line-height:11px;letter-spacing:0.038px;">00:02:06.053</div>
<div class="t" style="left:362px;top:32.69px;font-size:11px;line-height:11px;letter-spacing:0.065px;">+2:06.053</div>
<div class="t" style="left:493px;top:32.69px;font-size:11px;line-height:11px;">0</div>
<div class="t" style="left:553px;top:32.69px;font-size:11px;line-height:11px;letter-spacing:-0.043px;">126053</div>
<div class="t" style="left:611px;top:32.69px;font-size:11px;line-height:11px;letter-spacing:-0.072px;">28</div>
<div class="t" style="left:659px;top:32.69px;font-size:11px;line-height:11px;">0</div>
<div class="t" style="left:723px;top:32.69px;font-size:11px;line-height:11px;">0</div>
<div class="t" style="left:787px;top:32.69px;font-size:11px;line-height:11px;">0</div>
<div class="t" style="left:851px;top:32.69px;font-size:11px;line-height:11px;letter-spacing:-0.043px;">126053</div>
<div class="t" style="left:915px;top:32.69px;font-size:11px;line-height:11px;letter-spacing:-0.072px;">25</div>
<div class="r" style="left:437px;top:30.5px;width:48px;height:22.5px;background:#fdfdfd;border:1px solid #c4c4c4;border-radius:4px;box-sizing:border-box;"></div>
<div class="t" style="left:437px;top:36.69px;width:48px;text-align:center;font-size:11px;line-height:11px;">Del</div>
<div class="t" style="left:3px;top:60.69px;font-size:11px;line-height:11px;letter-spacing:-0.045px;">17337</div>
<div class="t" style="left:41px;top:60.69px;font-size:11px;line-height:11px;">3</div>
<div class="r" style="left:77px;top:56px;width:78px;height:27px;overflow:hidden;">
<div class="t" style="left:0px;top:4.69px;font-size:11px;line-height:11px;color:#ff0000;letter-spacing:-0.299px;">R.S.01 GT3 &#x27;16</div></div>
<div class="t" style="left:159px;top:60.69px;font-size:11px;line-height:11px;color:#ff0000;letter-spacing:-0.302px;">1 Runde</div>
<div class="t" style="left:288px;top:60.69px;font-size:11px;line-height:11px;letter-spacing:0.038px;">00:02:05.707</div>
<div class="t" style="left:362px;top:60.69px;font-size:11px;line-height:11px;letter-spacing:0.065px;">+2:05.707</div>
<div class="t" style="left:493px;top:60.69px;font-size:11px;line-height:11px;">0</div>
<div class="t" style="left:553px;top:60.69px;font-size:11px;line-height:11px;letter-spacing:-0.043px;">125707</div>
<div class="t" style="left:611px;top:60.69px;font-size:11px;line-height:11px;letter-spacing:-0.072px;">25</div>
<div class="t" style="left:659px;top:60.69px;font-size:11px;line-height:11px;">0</div>
<div class="t" style="left:723px;top:60.69px;font-size:11px;line-height:11px;">0</div>
<div class="t" style="left:787px;top:60.69px;font-size:11px;line-height:11px;">0</div>
<div class="t" style="left:851px;top:60.69px;font-size:11px;line-height:11px;letter-spacing:-0.043px;">125707</div>
<div class="t" style="left:915px;top:60.69px;font-size:11px;line-height:11px;letter-spacing:-0.072px;">25</div>
<div class="r" style="left:437px;top:58.5px;width:48px;height:22.5px;background:#fdfdfd;border:1px solid #c4c4c4;border-radius:4px;box-sizing:border-box;"></div>
<div class="t" style="left:437px;top:64.69px;width:48px;text-align:center;font-size:11px;line-height:11px;">Del</div>
<div class="t" style="left:3px;top:88.69px;font-size:11px;line-height:11px;letter-spacing:-0.045px;">17336</div>
<div class="t" style="left:41px;top:88.69px;font-size:11px;line-height:11px;">4</div>
<div class="r" style="left:77px;top:84px;width:78px;height:27px;overflow:hidden;">
<div class="t" style="left:0px;top:4.69px;font-size:11px;line-height:11px;color:#ff0000;letter-spacing:-0.512px;">NSX Gr.3</div></div>
<div class="t" style="left:159px;top:88.69px;font-size:11px;line-height:11px;color:#ff0000;letter-spacing:-0.302px;">1 Runde</div>
<div class="t" style="left:288px;top:88.69px;font-size:11px;line-height:11px;letter-spacing:0.038px;">00:02:05.272</div>
<div class="t" style="left:362px;top:88.69px;font-size:11px;line-height:11px;letter-spacing:0.065px;">+2:05.272</div>
<div class="t" style="left:493px;top:88.69px;font-size:11px;line-height:11px;">0</div>
<div class="t" style="left:553px;top:88.69px;font-size:11px;line-height:11px;letter-spacing:-0.043px;">125272</div>
<div class="t" style="left:611px;top:88.69px;font-size:11px;line-height:11px;letter-spacing:-0.072px;">22</div>
<div class="t" style="left:659px;top:88.69px;font-size:11px;line-height:11px;">0</div>
<div class="t" style="left:723px;top:88.69px;font-size:11px;line-height:11px;">0</div>
<div class="t" style="left:787px;top:88.69px;font-size:11px;line-height:11px;">0</div>
<div class="t" style="left:851px;top:88.69px;font-size:11px;line-height:11px;letter-spacing:-0.043px;">125272</div>
<div class="t" style="left:915px;top:88.69px;font-size:11px;line-height:11px;letter-spacing:-0.072px;">25</div>
<div class="r" style="left:437px;top:86.5px;width:48px;height:22.5px;background:#fdfdfd;border:1px solid #c4c4c4;border-radius:4px;box-sizing:border-box;"></div>
<div class="t" style="left:437px;top:92.69px;width:48px;text-align:center;font-size:11px;line-height:11px;">Del</div>
<div class="t" style="left:3px;top:116.69px;font-size:11px;line-height:11px;letter-spacing:-0.045px;">17315</div>
<div class="t" style="left:41px;top:116.69px;font-size:11px;line-height:11px;">5</div>
<div class="r" style="left:77px;top:112px;width:78px;height:27px;overflow:hidden;">
<div class="t" style="left:0px;top:4.69px;font-size:11px;line-height:11px;color:#ff0000;letter-spacing:-0.602px;">Ford GT LM</div></div>
<div class="t" style="left:159px;top:116.69px;font-size:11px;line-height:11px;color:#ff0000;letter-spacing:0.065px;">+2:10,445</div>
<div class="t" style="left:288px;top:116.69px;font-size:11px;line-height:11px;letter-spacing:0.038px;">00:02:04.491</div>
<div class="t" style="left:362px;top:116.69px;font-size:11px;line-height:11px;letter-spacing:0.065px;">+2:04.491</div>
<div class="t" style="left:493px;top:116.69px;font-size:11px;line-height:11px;">0</div>
<div class="t" style="left:553px;top:116.69px;font-size:11px;line-height:11px;letter-spacing:-0.043px;">124491</div>
<div class="t" style="left:611px;top:116.69px;font-size:11px;line-height:11px;letter-spacing:-0.072px;">20</div>
<div class="t" style="left:659px;top:116.69px;font-size:11px;line-height:11px;">0</div>
<div class="t" style="left:723px;top:116.69px;font-size:11px;line-height:11px;">0</div>
<div class="t" style="left:787px;top:116.69px;font-size:11px;line-height:11px;">0</div>
<div class="t" style="left:851px;top:116.69px;font-size:11px;line-height:11px;letter-spacing:-0.043px;">124491</div>
<div class="t" style="left:915px;top:116.69px;font-size:11px;line-height:11px;letter-spacing:-0.072px;">25</div>
<div class="r" style="left:437px;top:114.5px;width:48px;height:22.5px;background:#fdfdfd;border:1px solid #c4c4c4;border-radius:4px;box-sizing:border-box;"></div>
<div class="t" style="left:437px;top:120.69px;width:48px;text-align:center;font-size:11px;line-height:11px;">Del</div>
<div class="t" style="left:3px;top:144.69px;font-size:11px;line-height:11px;letter-spacing:-0.045px;">17314</div>
<div class="t" style="left:41px;top:144.69px;font-size:11px;line-height:11px;">6</div>
<div class="r" style="left:77px;top:140px;width:78px;height:27px;overflow:hidden;">
<div class="t" style="left:0px;top:4.69px;font-size:11px;line-height:11px;color:#ff0000;letter-spacing:-0.247px;">Beetle Gr.3</div></div>
<div class="t" style="left:159px;top:144.69px;font-size:11px;line-height:11px;color:#ff0000;letter-spacing:0.052px;">+42,009</div>
<div class="t" style="left:288px;top:144.69px;font-size:11px;line-height:11px;letter-spacing:0.038px;">00:02:02.755</div>
<div class="t" style="left:362px;top:144.69px;font-size:11px;line-height:11px;letter-spacing:0.065px;">+2:02.755</div>
<div class="t" style="left:493px;top:144.69px;font-size:11px;line-height:11px;">0</div>
<div class="t" style="left:553px;top:144.69px;font-size:11px;line-height:11px;letter-spacing:-0.043px;">122755</div>
<div class="t" style="left:611px;top:144.69px;font-size:11px;line-height:11px;letter-spacing:-0.072px;">18</div>
<div class="t" style="left:659px;top:144.69px;font-size:11px;line-height:11px;">0</div>
<div class="t" style="left:723px;top:144.69px;font-size:11px;line-height:11px;">0</div>
<div class="t" style="left:787px;top:144.69px;font-size:11px;line-height:11px;">0</div>
<div class="t" style="left:851px;top:144.69px;font-size:11px;line-height:11px;letter-spacing:-0.043px;">122755</div>
<div class="t" style="left:915px;top:144.69px;font-size:11px;line-height:11px;letter-spacing:-0.072px;">25</div>
<div class="r" style="left:437px;top:142.5px;width:48px;height:22.5px;background:#fdfdfd;border:1px solid #c4c4c4;border-radius:4px;box-sizing:border-box;"></div>
<div class="t" style="left:437px;top:148.69px;width:48px;text-align:center;font-size:11px;line-height:11px;">Del</div>
<div class="t" style="left:3px;top:172.69px;font-size:11px;line-height:11px;letter-spacing:-0.045px;">17313</div>
<div class="t" style="left:41px;top:172.69px;font-size:11px;line-height:11px;">7</div>
<div class="r" style="left:77px;top:168px;width:78px;height:27px;overflow:hidden;">
<div class="t" style="left:0px;top:4.69px;font-size:11px;line-height:11px;color:#ff0000;letter-spacing:-0.285px;">911 RSR (991)</div></div>
<div class="t" style="left:159px;top:172.69px;font-size:11px;line-height:11px;color:#ff0000;letter-spacing:0.065px;">+1:06,131</div>
<div class="t" style="left:288px;top:172.69px;font-size:11px;line-height:11px;letter-spacing:0.038px;">00:02:02.671</div>
<div class="t" style="left:362px;top:172.69px;font-size:11px;line-height:11px;letter-spacing:0.065px;">+2:02.671</div>
<div class="t" style="left:493px;top:172.69px;font-size:11px;line-height:11px;">0</div>
<div class="t" style="left:553px;top:172.69px;font-size:11px;line-height:11px;letter-spacing:-0.043px;">122671</div>
<div class="t" style="left:611px;top:172.69px;font-size:11px;line-height:11px;letter-spacing:-0.072px;">16</div>
<div class="t" style="left:659px;top:172.69px;font-size:11px;line-height:11px;">0</div>
<div class="t" style="left:723px;top:172.69px;font-size:11px;line-height:11px;">0</div>
<div class="t" style="left:787px;top:172.69px;font-size:11px;line-height:11px;">0</div>
<div class="t" style="left:851px;top:172.69px;font-size:11px;line-height:11px;letter-spacing:-0.043px;">122671</div>
<div class="t" style="left:915px;top:172.69px;font-size:11px;line-height:11px;letter-spacing:-0.072px;">25</div>
<div class="r" style="left:437px;top:170.5px;width:48px;height:22.5px;background:#fdfdfd;border:1px solid #c4c4c4;border-radius:4px;box-sizing:border-box;"></div>
<div class="t" style="left:437px;top:176.69px;width:48px;text-align:center;font-size:11px;line-height:11px;">Del</div>
<div class="t" style="left:3px;top:200.69px;font-size:11px;line-height:11px;letter-spacing:-0.045px;">17312</div>
<div class="t" style="left:41px;top:200.69px;font-size:11px;line-height:11px;">8</div>
<div class="r" style="left:77px;top:196px;width:78px;height:27px;overflow:hidden;">
<div class="t" style="left:0px;top:4.69px;font-size:11px;line-height:11px;color:#ff0000;letter-spacing:-0.468px;">GR Supra</div></div>
<div class="t" style="left:159px;top:200.69px;font-size:11px;line-height:11px;color:#ff0000;letter-spacing:0.052px;">+31,516</div>
<div class="t" style="left:288px;top:200.69px;font-size:11px;line-height:11px;letter-spacing:0.038px;">00:02:02.080</div>
<div class="t" style="left:362px;top:200.69px;font-size:11px;line-height:11px;letter-spacing:0.065px;">+2:02.080</div>
<div class="t" style="left:493px;top:200.69px;font-size:11px;line-height:11px;">0</div>
<div class="t" style="left:553px;top:200.69px;font-size:11px;line-height:11px;letter-spacing:-0.043px;">122080</div>
<div class="t" style="left:611px;top:200.69px;font-size:11px;line-height:11px;letter-spacing:-0.072px;">14</div>
<div class="t" style="left:659px;top:200.69px;font-size:11px;line-height:11px;">0</div>
<div class="t" style="left:723px;top:200.69px;font-size:11px;line-height:11px;">0</div>
<div class="t" style="left:787px;top:200.69px;font-size:11px;line-height:11px;">0</div>
<div class="t" style="left:851px;top:200.69px;font-size:11px;line-height:11px;letter-spacing:-0.043px;">122080</div>
<div class="t" style="left:915px;top:200.69px;font-size:11px;line-height:11px;letter-spacing:-0.072px;">25</div>
<div class="r" style="left:437px;top:198.5px;width:48px;height:22.5px;background:#fdfdfd;border:1px solid #c4c4c4;border-radius:4px;box-sizing:border-box;"></div>
<div class="t" style="left:437px;top:204.69px;width:48px;text-align:center;font-size:11px;line-height:11px;">Del</div>
<div class="t" style="left:3px;top:228.69px;font-size:11px;line-height:11px;letter-spacing:-0.045px;">17311</div>
<div class="t" style="left:41px;top:228.69px;font-size:11px;line-height:11px;">9</div>
<div class="r" style="left:77px;top:224px;width:78px;height:27px;overflow:hidden;">
<div class="t" style="left:0px;top:4.69px;font-size:11px;line-height:11px;color:#ff0000;letter-spacing:-0.719px;">GT-R NISMO</div></div>
<div class="t" style="left:159px;top:228.69px;font-size:11px;line-height:11px;color:#ff0000;letter-spacing:0.052px;">+23,670</div>
<div class="t" style="left:288px;top:228.69px;font-size:11px;line-height:11px;letter-spacing:0.038px;">00:02:01.922</div>
<div class="t" style="left:362px;top:228.69px;font-size:11px;line-height:11px;letter-spacing:0.065px;">+2:01.922</div>
<div class="t" style="left:493px;top:228.69px;font-size:11px;line-height:11px;">0</div>
<div class="t" style="left:553px;top:228.69px;font-size:11px;line-height:11px;letter-spacing:-0.043px;">121922</div>
<div class="t" style="left:611px;top:228.69px;font-size:11px;line-height:11px;letter-spacing:-0.072px;">12</div>
<div class="t" style="left:659px;top:228.69px;font-size:11px;line-height:11px;">0</div>
<div class="t" style="left:723px;top:228.69px;font-size:11px;line-height:11px;">0</div>
<div class="t" style="left:787px;top:228.69px;font-size:11px;line-height:11px;">0</div>
<div class="t" style="left:851px;top:228.69px;font-size:11px;line-height:11px;letter-spacing:-0.043px;">121922</div>
<div class="t" style="left:915px;top:228.69px;font-size:11px;line-height:11px;letter-spacing:-0.072px;">25</div>
<div class="r" style="left:437px;top:226.5px;width:48px;height:22.5px;background:#fdfdfd;border:1px solid #c4c4c4;border-radius:4px;box-sizing:border-box;"></div>
<div class="t" style="left:437px;top:232.69px;width:48px;text-align:center;font-size:11px;line-height:11px;">Del</div>
<div class="t" style="left:3px;top:256.69px;font-size:11px;line-height:11px;letter-spacing:-0.045px;">17332</div>
<div class="t" style="left:41px;top:256.69px;font-size:11px;line-height:11px;letter-spacing:-0.072px;">10</div>
<div class="r" style="left:77px;top:252px;width:78px;height:27px;overflow:hidden;">
<div class="t" style="left:0px;top:4.69px;font-size:11px;line-height:11px;color:#007800;letter-spacing:-0.179px;">MuffinProductio</div></div>
<div class="t" style="left:159px;top:256.69px;font-size:11px;line-height:11px;color:#ff0000;letter-spacing:-0.546px;">GT-R NISMO GT3 &#x27;18</div>
<div class="t" style="left:288px;top:256.69px;font-size:11px;line-height:11px;letter-spacing:0.038px;">00:01:59.678</div>
<div class="t" style="left:362px;top:256.69px;font-size:11px;line-height:11px;letter-spacing:0.065px;">+1:59.678</div>
<div class="t" style="left:493px;top:256.69px;font-size:11px;line-height:11px;">0</div>
<div class="t" style="left:553px;top:256.69px;font-size:11px;line-height:11px;letter-spacing:-0.043px;">119678</div>
<div class="t" style="left:611px;top:256.69px;font-size:11px;line-height:11px;letter-spacing:-0.072px;">10</div>
<div class="t" style="left:659px;top:256.69px;font-size:11px;line-height:11px;">0</div>
<div class="t" style="left:723px;top:256.69px;font-size:11px;line-height:11px;letter-spacing:-0.048px;">3232</div>
<div class="t" style="left:787px;top:256.69px;font-size:11px;line-height:11px;">0</div>
<div class="t" style="left:851px;top:256.69px;font-size:11px;line-height:11px;letter-spacing:-0.043px;">119678</div>
<div class="t" style="left:915px;top:256.69px;font-size:11px;line-height:11px;letter-spacing:-0.072px;">25</div>
<div class="r" style="left:437px;top:254.5px;width:48px;height:22.5px;background:#fdfdfd;border:1px solid #c4c4c4;border-radius:4px;box-sizing:border-box;"></div>
<div class="t" style="left:437px;top:260.69px;width:48px;text-align:center;font-size:11px;line-height:11px;">Del</div>
<div class="t" style="left:3px;top:284.69px;font-size:11px;line-height:11px;letter-spacing:-0.045px;">17331</div>
<div class="t" style="left:41px;top:284.69px;font-size:11px;line-height:11px;letter-spacing:-0.072px;">11</div>
<div class="r" style="left:77px;top:280px;width:78px;height:27px;overflow:hidden;">
<div class="t" style="left:0px;top:4.69px;font-size:11px;line-height:11px;color:#007800;letter-spacing:-0.195px;">MoRph3us77db</div></div>
<div class="t" style="left:159px;top:284.69px;font-size:11px;line-height:11px;color:#ff0000;letter-spacing:-0.321px;">Mercedes-AMG GT3 &#x27;20</div>
<div class="t" style="left:288px;top:284.69px;font-size:11px;line-height:11px;letter-spacing:0.038px;">00:01:49.419</div>
<div class="t" style="left:362px;top:284.69px;font-size:11px;line-height:11px;letter-spacing:0.065px;">+1:49.419</div>
<div class="t" style="left:493px;top:284.69px;font-size:11px;line-height:11px;">0</div>
<div class="t" style="left:553px;top:284.69px;font-size:11px;line-height:11px;letter-spacing:-0.043px;">109419</div>
<div class="t" style="left:611px;top:284.69px;font-size:11px;line-height:11px;">8</div>
<div class="t" style="left:659px;top:284.69px;font-size:11px;line-height:11px;">0</div>
<div class="t" style="left:723px;top:284.69px;font-size:11px;line-height:11px;letter-spacing:-0.048px;">3201</div>
<div class="t" style="left:787px;top:284.69px;font-size:11px;line-height:11px;">0</div>
<div class="t" style="left:851px;top:284.69px;font-size:11px;line-height:11px;letter-spacing:-0.043px;">109419</div>
<div class="t" style="left:915px;top:284.69px;font-size:11px;line-height:11px;letter-spacing:-0.072px;">25</div>
<div class="r" style="left:437px;top:282.5px;width:48px;height:22.5px;background:#fdfdfd;border:1px solid #c4c4c4;border-radius:4px;box-sizing:border-box;"></div>
<div class="t" style="left:437px;top:288.69px;width:48px;text-align:center;font-size:11px;line-height:11px;">Del</div>
<div class="t" style="left:3px;top:312.69px;font-size:11px;line-height:11px;letter-spacing:-0.045px;">17310</div>
<div class="t" style="left:41px;top:312.69px;font-size:11px;line-height:11px;letter-spacing:-0.072px;">12</div>
<div class="r" style="left:77px;top:308px;width:78px;height:27px;overflow:hidden;">
<div class="t" style="left:0px;top:4.69px;font-size:11px;line-height:11px;color:#007800;letter-spacing:-0.195px;">MoRph3us77db</div></div>
<div class="t" style="left:159px;top:312.69px;font-size:11px;line-height:11px;color:#ff0000;letter-spacing:-0.321px;">Mercedes-AMG GT3 &#x27;20</div>
<div class="t" style="left:288px;top:312.69px;font-size:11px;line-height:11px;letter-spacing:0.038px;">00:01:49.419</div>
<div class="t" style="left:362px;top:312.69px;font-size:11px;line-height:11px;letter-spacing:0.065px;">+1:49.419</div>
<div class="t" style="left:493px;top:312.69px;font-size:11px;line-height:11px;">0</div>
<div class="t" style="left:553px;top:312.69px;font-size:11px;line-height:11px;letter-spacing:-0.043px;">109419</div>
<div class="t" style="left:611px;top:312.69px;font-size:11px;line-height:11px;">6</div>
<div class="t" style="left:659px;top:312.69px;font-size:11px;line-height:11px;">0</div>
<div class="t" style="left:723px;top:312.69px;font-size:11px;line-height:11px;letter-spacing:-0.048px;">3201</div>
<div class="t" style="left:787px;top:312.69px;font-size:11px;line-height:11px;">0</div>
<div class="t" style="left:851px;top:312.69px;font-size:11px;line-height:11px;letter-spacing:-0.043px;">109419</div>
<div class="t" style="left:915px;top:312.69px;font-size:11px;line-height:11px;letter-spacing:-0.072px;">25</div>
<div class="r" style="left:437px;top:310.5px;width:48px;height:22.5px;background:#fdfdfd;border:1px solid #c4c4c4;border-radius:4px;box-sizing:border-box;"></div>
<div class="t" style="left:437px;top:316.69px;width:48px;text-align:center;font-size:11px;line-height:11px;">Del</div>
<div class="t" style="left:3px;top:340.69px;font-size:11px;line-height:11px;letter-spacing:-0.045px;">17309</div>
<div class="t" style="left:41px;top:340.69px;font-size:11px;line-height:11px;letter-spacing:-0.072px;">13</div>
<div class="r" style="left:77px;top:336px;width:78px;height:27px;overflow:hidden;">
<div class="t" style="left:0px;top:4.69px;font-size:11px;line-height:11px;color:#007800;letter-spacing:-0.281px;">HSK_Elpatroni</div></div>
<div class="t" style="left:159px;top:340.69px;font-size:11px;line-height:11px;color:#ff0000;letter-spacing:-0.427px;">BRZ GT300 &#x27;21</div>
<div class="t" style="left:288px;top:340.69px;font-size:11px;line-height:11px;letter-spacing:0.038px;">00:01:07.226</div>
<div class="t" style="left:362px;top:340.69px;font-size:11px;line-height:11px;letter-spacing:0.065px;">+1:07.226</div>
<div class="t" style="left:493px;top:340.69px;font-size:11px;line-height:11px;">0</div>
<div class="t" style="left:553px;top:340.69px;font-size:11px;line-height:11px;letter-spacing:-0.045px;">67226</div>
<div class="t" style="left:611px;top:340.69px;font-size:11px;line-height:11px;">4</div>
<div class="t" style="left:659px;top:340.69px;font-size:11px;line-height:11px;">0</div>
<div class="t" style="left:723px;top:340.69px;font-size:11px;line-height:11px;letter-spacing:-0.048px;">3419</div>
<div class="t" style="left:787px;top:340.69px;font-size:11px;line-height:11px;">0</div>
<div class="t" style="left:851px;top:340.69px;font-size:11px;line-height:11px;letter-spacing:-0.045px;">67226</div>
<div class="t" style="left:915px;top:340.69px;font-size:11px;line-height:11px;letter-spacing:-0.072px;">25</div>
<div class="r" style="left:437px;top:338.5px;width:48px;height:22.5px;background:#fdfdfd;border:1px solid #c4c4c4;border-radius:4px;box-sizing:border-box;"></div>
<div class="t" style="left:437px;top:344.69px;width:48px;text-align:center;font-size:11px;line-height:11px;">Del</div>
<div class="t" style="left:3px;top:368.69px;font-size:11px;line-height:11px;letter-spacing:-0.045px;">17330</div>
<div class="t" style="left:41px;top:368.69px;font-size:11px;line-height:11px;letter-spacing:-0.072px;">14</div>
<div class="r" style="left:77px;top:364px;width:78px;height:27px;overflow:hidden;">
<div class="t" style="left:0px;top:4.69px;font-size:11px;line-height:11px;color:#007800;letter-spacing:-0.281px;">HSK_Elpatroni</div></div>
<div class="t" style="left:159px;top:368.69px;font-size:11px;line-height:11px;color:#ff0000;letter-spacing:-0.427px;">BRZ GT300 &#x27;21</div>
<div class="t" style="left:288px;top:368.69px;font-size:11px;line-height:11px;letter-spacing:0.038px;">00:01:07.226</div>
<div class="t" style="left:362px;top:368.69px;font-size:11px;line-height:11px;letter-spacing:0.065px;">+1:07.226</div>
<div class="t" style="left:493px;top:368.69px;font-size:11px;line-height:11px;">0</div>
<div class="t" style="left:553px;top:368.69px;font-size:11px;line-height:11px;letter-spacing:-0.045px;">67226</div>
<div class="t" style="left:611px;top:368.69px;font-size:11px;line-height:11px;">2</div>
<div class="t" style="left:659px;top:368.69px;font-size:11px;line-height:11px;">0</div>
<div class="t" style="left:723px;top:368.69px;font-size:11px;line-height:11px;letter-spacing:-0.048px;">3419</div>
<div class="t" style="left:787px;top:368.69px;font-size:11px;line-height:11px;">0</div>
<div class="t" style="left:851px;top:368.69px;font-size:11px;line-height:11px;letter-spacing:-0.045px;">67226</div>
<div class="t" style="left:915px;top:368.69px;font-size:11px;line-height:11px;letter-spacing:-0.072px;">25</div>
<div class="r" style="left:437px;top:366.5px;width:48px;height:22.5px;background:#fdfdfd;border:1px solid #c4c4c4;border-radius:4px;box-sizing:border-box;"></div>
<div class="t" style="left:437px;top:372.69px;width:48px;text-align:center;font-size:11px;line-height:11px;">Del</div>
<div class="t" style="left:3px;top:396.69px;font-size:11px;line-height:11px;letter-spacing:-0.045px;">17329</div>
<div class="t" style="left:41px;top:396.69px;font-size:11px;line-height:11px;letter-spacing:-0.072px;">15</div>
<div class="r" style="left:77px;top:392px;width:78px;height:27px;overflow:hidden;">
<div class="t" style="left:0px;top:4.69px;font-size:11px;line-height:11px;color:#007800;letter-spacing:-0.235px;">KeepFunkin</div></div>
<div class="t" style="left:159px;top:396.69px;font-size:11px;line-height:11px;color:#ff0000;letter-spacing:-0.248px;">911 RSR (991) &quot;17</div>
<div class="t" style="left:288px;top:396.69px;font-size:11px;line-height:11px;letter-spacing:0.038px;">00:01:06.131</div>
<div class="t" style="left:362px;top:396.69px;font-size:11px;line-height:11px;letter-spacing:0.065px;">+1:06.131</div>
<div class="t" style="left:493px;top:396.69px;font-size:11px;line-height:11px;">0</div>
<div class="t" style="left:553px;top:396.69px;font-size:11px;line-height:11px;letter-spacing:-0.045px;">66131</div>
<div class="t" style="left:611px;top:396.69px;font-size:11px;line-height:11px;">1</div>
<div class="t" style="left:659px;top:396.69px;font-size:11px;line-height:11px;">0</div>
<div class="t" style="left:723px;top:396.69px;font-size:11px;line-height:11px;letter-spacing:-0.048px;">3343</div>
<div class="t" style="left:787px;top:396.69px;font-size:11px;line-height:11px;">0</div>
<div class="t" style="left:851px;top:396.69px;font-size:11px;line-height:11px;letter-spacing:-0.045px;">66131</div>
<div class="t" style="left:915px;top:396.69px;font-size:11px;line-height:11px;letter-spacing:-0.072px;">25</div>
<div class="r" style="left:437px;top:394.5px;width:48px;height:22.5px;background:#fdfdfd;border:1px solid #c4c4c4;border-radius:4px;box-sizing:border-box;"></div>
<div class="t" style="left:437px;top:400.69px;width:48px;text-align:center;font-size:11px;line-height:11px;">Del</div>
<div class="t" style="left:3px;top:424.69px;font-size:11px;line-height:11px;letter-spacing:-0.045px;">17328</div>
<div class="t" style="left:41px;top:424.69px;font-size:11px;line-height:11px;letter-spacing:-0.072px;">16</div>
<div class="r" style="left:77px;top:420px;width:78px;height:27px;overflow:hidden;">
<div class="t" style="left:0px;top:4.69px;font-size:11px;line-height:11px;color:#ff0000;letter-spacing:-0.238px;">aWM_Centaury</div></div>
<div class="t" style="left:159px;top:424.69px;font-size:11px;line-height:11px;color:#ff0000;letter-spacing:-0.247px;">Beetle Gr.3</div>
<div class="t" style="left:288px;top:424.69px;font-size:11px;line-height:11px;letter-spacing:0.038px;">00:00:42.009</div>
<div class="t" style="left:362px;top:424.69px;font-size:11px;line-height:11px;letter-spacing:0.052px;">+42.009</div>
<div class="t" style="left:493px;top:424.69px;font-size:11px;line-height:11px;">0</div>
<div class="t" style="left:553px;top:424.69px;font-size:11px;line-height:11px;letter-spacing:-0.045px;">42009</div>
<div class="t" style="left:611px;top:424.69px;font-size:11px;line-height:11px;">0</div>
<div class="t" style="left:659px;top:424.69px;font-size:11px;line-height:11px;">0</div>
<div class="t" style="left:723px;top:424.69px;font-size:11px;line-height:11px;">0</div>
<div class="t" style="left:787px;top:424.69px;font-size:11px;line-height:11px;">0</div>
<div class="t" style="left:851px;top:424.69px;font-size:11px;line-height:11px;letter-spacing:-0.045px;">42009</div>
<div class="t" style="left:915px;top:424.69px;font-size:11px;line-height:11px;letter-spacing:-0.072px;">25</div>
<div class="r" style="left:437px;top:422.5px;width:48px;height:22.5px;background:#fdfdfd;border:1px solid #c4c4c4;border-radius:4px;box-sizing:border-box;"></div>
<div class="t" style="left:437px;top:428.69px;width:48px;text-align:center;font-size:11px;line-height:11px;">Del</div>
<div class="t" style="left:3px;top:452.69px;font-size:11px;line-height:11px;letter-spacing:-0.045px;">17327</div>
<div class="t" style="left:41px;top:452.69px;font-size:11px;line-height:11px;letter-spacing:-0.072px;">17</div>
<div class="r" style="left:77px;top:448px;width:78px;height:27px;overflow:hidden;">
<div class="t" style="left:0px;top:4.69px;font-size:11px;line-height:11px;color:#ff0000;letter-spacing:-0.668px;">TTW_</div></div>
<div class="t" style="left:159px;top:452.69px;font-size:11px;line-height:11px;color:#ff0000;letter-spacing:-0.667px;">RX-VISION GT3</div>
<div class="t" style="left:288px;top:452.69px;font-size:11px;line-height:11px;letter-spacing:0.038px;">00:00:34.273</div>
<div class="t" style="left:362px;top:452.69px;font-size:11px;line-height:11px;letter-spacing:0.052px;">+34.273</div>
<div class="t" style="left:493px;top:452.69px;font-size:11px;line-height:11px;">0</div>
<div class="t" style="left:553px;top:452.69px;font-size:11px;line-height:11px;letter-spacing:-0.045px;">34273</div>
<div class="t" style="left:611px;top:452.69px;font-size:11px;line-height:11px;">0</div>
<div class="t" style="left:659px;top:452.69px;font-size:11px;line-height:11px;">0</div>
<div class="t" style="left:723px;top:452.69px;font-size:11px;line-height:11px;">0</div>
<div class="t" style="left:787px;top:452.69px;font-size:11px;line-height:11px;">0</div>
<div class="t" style="left:851px;top:452.69px;font-size:11px;line-height:11px;letter-spacing:-0.045px;">34273</div>
<div class="t" style="left:915px;top:452.69px;font-size:11px;line-height:11px;letter-spacing:-0.072px;">25</div>
<div class="r" style="left:437px;top:450.5px;width:48px;height:22.5px;background:#fdfdfd;border:1px solid #c4c4c4;border-radius:4px;box-sizing:border-box;"></div>
<div class="t" style="left:437px;top:456.69px;width:48px;text-align:center;font-size:11px;line-height:11px;">Del</div>
<div class="t" style="left:3px;top:480.69px;font-size:11px;line-height:11px;letter-spacing:-0.045px;">17326</div>
<div class="t" style="left:41px;top:480.69px;font-size:11px;line-height:11px;letter-spacing:-0.072px;">18</div>
<div class="r" style="left:77px;top:476px;width:78px;height:27px;overflow:hidden;">
<div class="t" style="left:0px;top:4.69px;font-size:11px;line-height:11px;color:#ff0000;letter-spacing:-0.307px;">David _S 90</div></div>
<div class="t" style="left:159px;top:480.69px;font-size:11px;line-height:11px;color:#ff0000;letter-spacing:-0.321px;">GR Supra Racing Concept</div>
<div class="t" style="left:288px;top:480.69px;font-size:11px;line-height:11px;letter-spacing:0.038px;">00:00:31.516</div>
<div class="t" style="left:362px;top:480.69px;font-size:11px;line-height:11px;letter-spacing:0.052px;">+31.516</div>
<div class="t" style="left:493px;top:480.69px;font-size:11px;line-height:11px;">0</div>
<div class="t" style="left:553px;top:480.69px;font-size:11px;line-height:11px;letter-spacing:-0.045px;">31516</div>
<div class="t" style="left:611px;top:480.69px;font-size:11px;line-height:11px;">0</div>
<div class="t" style="left:659px;top:480.69px;font-size:11px;line-height:11px;">0</div>
<div class="t" style="left:723px;top:480.69px;font-size:11px;line-height:11px;">0</div>
<div class="t" style="left:787px;top:480.69px;font-size:11px;line-height:11px;">0</div>
<div class="t" style="left:851px;top:480.69px;font-size:11px;line-height:11px;letter-spacing:-0.045px;">31516</div>
<div class="t" style="left:915px;top:480.69px;font-size:11px;line-height:11px;letter-spacing:-0.072px;">25</div>
<div class="r" style="left:437px;top:478.5px;width:48px;height:22.5px;background:#fdfdfd;border:1px solid #c4c4c4;border-radius:4px;box-sizing:border-box;"></div>
<div class="t" style="left:437px;top:484.69px;width:48px;text-align:center;font-size:11px;line-height:11px;">Del</div>
<div class="t" style="left:3px;top:508.69px;font-size:11px;line-height:11px;letter-spacing:-0.045px;">17325</div>
<div class="t" style="left:41px;top:508.69px;font-size:11px;line-height:11px;letter-spacing:-0.072px;">19</div>
<div class="r" style="left:77px;top:504px;width:78px;height:27px;overflow:hidden;">
<div class="t" style="left:0px;top:4.69px;font-size:11px;line-height:11px;color:#007800;letter-spacing:-0.313px;">EGT_Frudo79</div></div>
<div class="t" style="left:159px;top:508.69px;font-size:11px;line-height:11px;color:#ff0000;letter-spacing:-0.546px;">GT-R NISMO GT3 &#x27;18</div>
<div class="t" style="left:288px;top:508.69px;font-size:11px;line-height:11px;letter-spacing:0.038px;">00:00:23.670</div>
<div class="t" style="left:362px;top:508.69px;font-size:11px;line-height:11px;letter-spacing:0.052px;">+23.670</div>
<div class="t" style="left:493px;top:508.69px;font-size:11px;line-height:11px;">0</div>
<div class="t" style="left:553px;top:508.69px;font-size:11px;line-height:11px;letter-spacing:-0.045px;">23670</div>
<div class="t" style="left:611px;top:508.69px;font-size:11px;line-height:11px;">0</div>
<div class="t" style="left:659px;top:508.69px;font-size:11px;line-height:11px;">0</div>
<div class="t" style="left:723px;top:508.69px;font-size:11px;line-height:11px;letter-spacing:-0.048px;">1602</div>
<div class="t" style="left:787px;top:508.69px;font-size:11px;line-height:11px;">0</div>
<div class="t" style="left:851px;top:508.69px;font-size:11px;line-height:11px;letter-spacing:-0.045px;">23670</div>
<div class="t" style="left:915px;top:508.69px;font-size:11px;line-height:11px;letter-spacing:-0.072px;">25</div>
<div class="r" style="left:437px;top:506.5px;width:48px;height:22.5px;background:#fdfdfd;border:1px solid #c4c4c4;border-radius:4px;box-sizing:border-box;"></div>
<div class="t" style="left:437px;top:512.69px;width:48px;text-align:center;font-size:11px;line-height:11px;">Del</div>
<div class="t" style="left:3px;top:536.69px;font-size:11px;line-height:11px;letter-spacing:-0.045px;">17333</div>
<div class="t" style="left:41px;top:536.69px;font-size:11px;line-height:11px;letter-spacing:-0.072px;">20</div>
<div class="r" style="left:77px;top:532px;width:78px;height:27px;overflow:hidden;">
<div class="t" style="left:0px;top:4.69px;font-size:11px;line-height:11px;color:#ff0000;letter-spacing:0px;">1</div></div>
<div class="t" style="left:159px;top:536.69px;font-size:11px;line-height:11px;color:#ff0000;letter-spacing:-0.248px;">911 RSR (991) &quot;17</div>
<div class="t" style="left:288px;top:536.69px;font-size:11px;line-height:11px;letter-spacing:0.038px;">00:00:00.001</div>
<div class="t" style="left:493px;top:536.69px;font-size:11px;line-height:11px;">0</div>
<div class="t" style="left:553px;top:536.69px;font-size:11px;line-height:11px;">1</div>
<div class="t" style="left:611px;top:536.69px;font-size:11px;line-height:11px;">0</div>
<div class="t" style="left:659px;top:536.69px;font-size:11px;line-height:11px;">0</div>
<div class="t" style="left:723px;top:536.69px;font-size:11px;line-height:11px;">0</div>
<div class="t" style="left:787px;top:536.69px;font-size:11px;line-height:11px;">0</div>
<div class="t" style="left:851px;top:536.69px;font-size:11px;line-height:11px;">1</div>
<div class="t" style="left:915px;top:536.69px;font-size:11px;line-height:11px;letter-spacing:-0.072px;">25</div>
<div class="r" style="left:437px;top:534.5px;width:48px;height:22.5px;background:#fdfdfd;border:1px solid #c4c4c4;border-radius:4px;box-sizing:border-box;"></div>
<div class="t" style="left:437px;top:540.69px;width:48px;text-align:center;font-size:11px;line-height:11px;">Del</div>
<div class="t" style="left:3px;top:564.69px;font-size:11px;line-height:11px;letter-spacing:-0.045px;">17321</div>
<div class="t" style="left:41px;top:564.69px;font-size:11px;line-height:11px;letter-spacing:-0.072px;">21</div>
<div class="r" style="left:77px;top:560px;width:78px;height:27px;overflow:hidden;">
<div class="t" style="left:0px;top:4.69px;font-size:11px;line-height:11px;color:#ff0000;letter-spacing:-0.456px;">GRT Julian</div></div>
<div class="t" style="left:159px;top:564.69px;font-size:11px;line-height:11px;color:#ff0000;letter-spacing:-0.512px;">NSX Gr.3</div>
<div class="t" style="left:288px;top:564.69px;font-size:11px;line-height:11px;letter-spacing:0.038px;">00:00:00.014</div>
<div class="t" style="left:493px;top:564.69px;font-size:11px;line-height:11px;">1</div>
<div class="t" style="left:553px;top:564.69px;font-size:11px;line-height:11px;letter-spacing:-0.072px;">14</div>
<div class="t" style="left:611px;top:564.69px;font-size:11px;line-height:11px;">0</div>
<div class="t" style="left:659px;top:564.69px;font-size:11px;line-height:11px;">0</div>
<div class="t" style="left:723px;top:564.69px;font-size:11px;line-height:11px;">0</div>
<div class="t" style="left:787px;top:564.69px;font-size:11px;line-height:11px;">0</div>
<div class="t" style="left:851px;top:564.69px;font-size:11px;line-height:11px;letter-spacing:-0.072px;">14</div>
<div class="t" style="left:915px;top:564.69px;font-size:11px;line-height:11px;letter-spacing:-0.072px;">25</div>
<div class="r" style="left:437px;top:562.5px;width:48px;height:22.5px;background:#fdfdfd;border:1px solid #c4c4c4;border-radius:4px;box-sizing:border-box;"></div>
<div class="t" style="left:437px;top:568.69px;width:48px;text-align:center;font-size:11px;line-height:11px;">Del</div>
<div class="t" style="left:3px;top:592.69px;font-size:11px;line-height:11px;letter-spacing:-0.045px;">17320</div>
<div class="t" style="left:41px;top:592.69px;font-size:11px;line-height:11px;letter-spacing:-0.072px;">22</div>
<div class="r" style="left:77px;top:588px;width:78px;height:27px;overflow:hidden;">
<div class="t" style="left:0px;top:4.69px;font-size:11px;line-height:11px;color:#ff0000;letter-spacing:-0.392px;">IMP_Denyo_JD</div></div>
<div class="t" style="left:159px;top:592.69px;font-size:11px;line-height:11px;color:#ff0000;letter-spacing:-0.444px;">M3 GT &#x27;11</div>
<div class="t" style="left:288px;top:592.69px;font-size:11px;line-height:11px;letter-spacing:0.038px;">00:00:00.013</div>
<div class="t" style="left:493px;top:592.69px;font-size:11px;line-height:11px;">1</div>
<div class="t" style="left:553px;top:592.69px;font-size:11px;line-height:11px;letter-spacing:-0.072px;">13</div>
<div class="t" style="left:611px;top:592.69px;font-size:11px;line-height:11px;">0</div>
<div class="t" style="left:659px;top:592.69px;font-size:11px;line-height:11px;">0</div>
<div class="t" style="left:723px;top:592.69px;font-size:11px;line-height:11px;">0</div>
<div class="t" style="left:787px;top:592.69px;font-size:11px;line-height:11px;">0</div>
<div class="t" style="left:851px;top:592.69px;font-size:11px;line-height:11px;letter-spacing:-0.072px;">13</div>
<div class="t" style="left:915px;top:592.69px;font-size:11px;line-height:11px;letter-spacing:-0.072px;">25</div>
<div class="r" style="left:437px;top:590.5px;width:48px;height:22.5px;background:#fdfdfd;border:1px solid #c4c4c4;border-radius:4px;box-sizing:border-box;"></div>
<div class="t" style="left:437px;top:596.69px;width:48px;text-align:center;font-size:11px;line-height:11px;">Del</div>
<div class="t" style="left:3px;top:620.69px;font-size:11px;line-height:11px;letter-spacing:-0.045px;">17319</div>
<div class="t" style="left:41px;top:620.69px;font-size:11px;line-height:11px;letter-spacing:-0.072px;">23</div>
<div class="r" style="left:77px;top:616px;width:78px;height:27px;overflow:hidden;">
<div class="t" style="left:0px;top:4.69px;font-size:11px;line-height:11px;color:#ff0000;letter-spacing:-0.409px;">Toby PN89</div></div>
<div class="t" style="left:159px;top:620.69px;font-size:11px;line-height:11px;color:#ff0000;letter-spacing:-0.299px;">R.S.01 GT3 &#x27;16</div>
<div class="t" style="left:288px;top:620.69px;font-size:11px;line-height:11px;letter-spacing:0.038px;">00:00:00.012</div>
<div class="t" style="left:493px;top:620.69px;font-size:11px;line-height:11px;">1</div>
<div class="t" style="left:553px;top:620.69px;font-size:11px;line-height:11px;letter-spacing:-0.072px;">12</div>
<div class="t" style="left:611px;top:620.69px;font-size:11px;line-height:11px;">0</div>
<div class="t" style="left:659px;top:620.69px;font-size:11px;line-height:11px;">0</div>
<div class="t" style="left:723px;top:620.69px;font-size:11px;line-height:11px;">0</div>
<div class="t" style="left:787px;top:620.69px;font-size:11px;line-height:11px;">0</div>
<div class="t" style="left:851px;top:620.69px;font-size:11px;line-height:11px;letter-spacing:-0.072px;">12</div>
<div class="t" style="left:915px;top:620.69px;font-size:11px;line-height:11px;letter-spacing:-0.072px;">25</div>
<div class="r" style="left:437px;top:618.5px;width:48px;height:22.5px;background:#fdfdfd;border:1px solid #c4c4c4;border-radius:4px;box-sizing:border-box;"></div>
<div class="t" style="left:437px;top:624.69px;width:48px;text-align:center;font-size:11px;line-height:11px;">Del</div>
<div class="t" style="left:3px;top:648.69px;font-size:11px;line-height:11px;letter-spacing:-0.045px;">17335</div>
<div class="t" style="left:41px;top:648.69px;font-size:11px;line-height:11px;letter-spacing:-0.072px;">24</div>
<div class="r" style="left:77px;top:644px;width:78px;height:27px;overflow:hidden;">
<div class="t" style="left:0px;top:4.69px;font-size:11px;line-height:11px;color:#007800;letter-spacing:-0.227px;">Docker</div></div>
<div class="t" style="left:159px;top:648.69px;font-size:11px;line-height:11px;color:#ff0000;letter-spacing:-0.321px;">GR Supra Racing Concept</div>
<div class="t" style="left:288px;top:648.69px;font-size:11px;line-height:11px;letter-spacing:0.038px;">00:00:00.011</div>
<div class="t" style="left:493px;top:648.69px;font-size:11px;line-height:11px;">1</div>
<div class="t" style="left:553px;top:648.69px;font-size:11px;line-height:11px;letter-spacing:-0.072px;">11</div>
<div class="t" style="left:611px;top:648.69px;font-size:11px;line-height:11px;">0</div>
<div class="t" style="left:659px;top:648.69px;font-size:11px;line-height:11px;">0</div>
<div class="t" style="left:723px;top:648.69px;font-size:11px;line-height:11px;letter-spacing:-0.048px;">3104</div>
<div class="t" style="left:787px;top:648.69px;font-size:11px;line-height:11px;">0</div>
<div class="t" style="left:851px;top:648.69px;font-size:11px;line-height:11px;letter-spacing:-0.072px;">11</div>
<div class="t" style="left:915px;top:648.69px;font-size:11px;line-height:11px;letter-spacing:-0.072px;">25</div>
<div class="r" style="left:437px;top:646.5px;width:48px;height:22.5px;background:#fdfdfd;border:1px solid #c4c4c4;border-radius:4px;box-sizing:border-box;"></div>
<div class="t" style="left:437px;top:652.69px;width:48px;text-align:center;font-size:11px;line-height:11px;">Del</div>
<div class="t" style="left:3px;top:676.69px;font-size:11px;line-height:11px;letter-spacing:-0.045px;">17339</div>
<div class="t" style="left:41px;top:676.69px;font-size:11px;line-height:11px;letter-spacing:-0.072px;">25</div>
<div class="r" style="left:77px;top:672px;width:78px;height:27px;overflow:hidden;">
<div class="t" style="left:0px;top:4.69px;font-size:11px;line-height:11px;color:#ff0000;letter-spacing:0px;"></div></div>
<div class="t" style="left:159px;top:676.69px;font-size:11px;line-height:11px;color:#ff0000;letter-spacing:-0.302px;">1 Runde</div>
<div class="t" style="left:288px;top:676.69px;font-size:11px;line-height:11px;letter-spacing:0.065px;">00:00:00.</div>
<div class="t" style="left:493px;top:676.69px;font-size:11px;line-height:11px;">1</div>
<div class="t" style="left:553px;top:676.69px;font-size:11px;line-height:11px;">0</div>
<div class="t" style="left:611px;top:676.69px;font-size:11px;line-height:11px;">0</div>
<div class="t" style="left:659px;top:676.69px;font-size:11px;line-height:11px;">0</div>
<div class="t" style="left:723px;top:676.69px;font-size:11px;line-height:11px;">0</div>
<div class="t" style="left:787px;top:676.69px;font-size:11px;line-height:11px;">0</div>
<div class="t" style="left:851px;top:676.69px;font-size:11px;line-height:11px;">0</div>
<div class="t" style="left:915px;top:676.69px;font-size:11px;line-height:11px;letter-spacing:-0.072px;">25</div>
<div class="r" style="left:437px;top:674.5px;width:48px;height:22.5px;background:#fdfdfd;border:1px solid #c4c4c4;border-radius:4px;box-sizing:border-box;"></div>
<div class="t" style="left:437px;top:680.69px;width:48px;text-align:center;font-size:11px;line-height:11px;">Del</div>
</div>
<div class="r" style="left:1685px;top:266px;width:16px;height:719px;background:#f0f0f0;"></div>
<div class="r" style="left:1692px;top:283px;width:2px;height:495px;background:#808080;border-radius:1px;"></div>
<div class="r" style="left:474px;top:301px;width:16px;height:22px;"><svg width="16" height="22" viewBox="0 0 16 22"><path d="M1.5 1.2 L1.5 17.6 L5.3 14 L8.4 19.4 L10.7 18.4 L7.9 12.9 L12.6 12.9 Z" fill="#fff" stroke="#000" stroke-width="1.2" stroke-linejoin="round"/></svg></div>
</body></html>
